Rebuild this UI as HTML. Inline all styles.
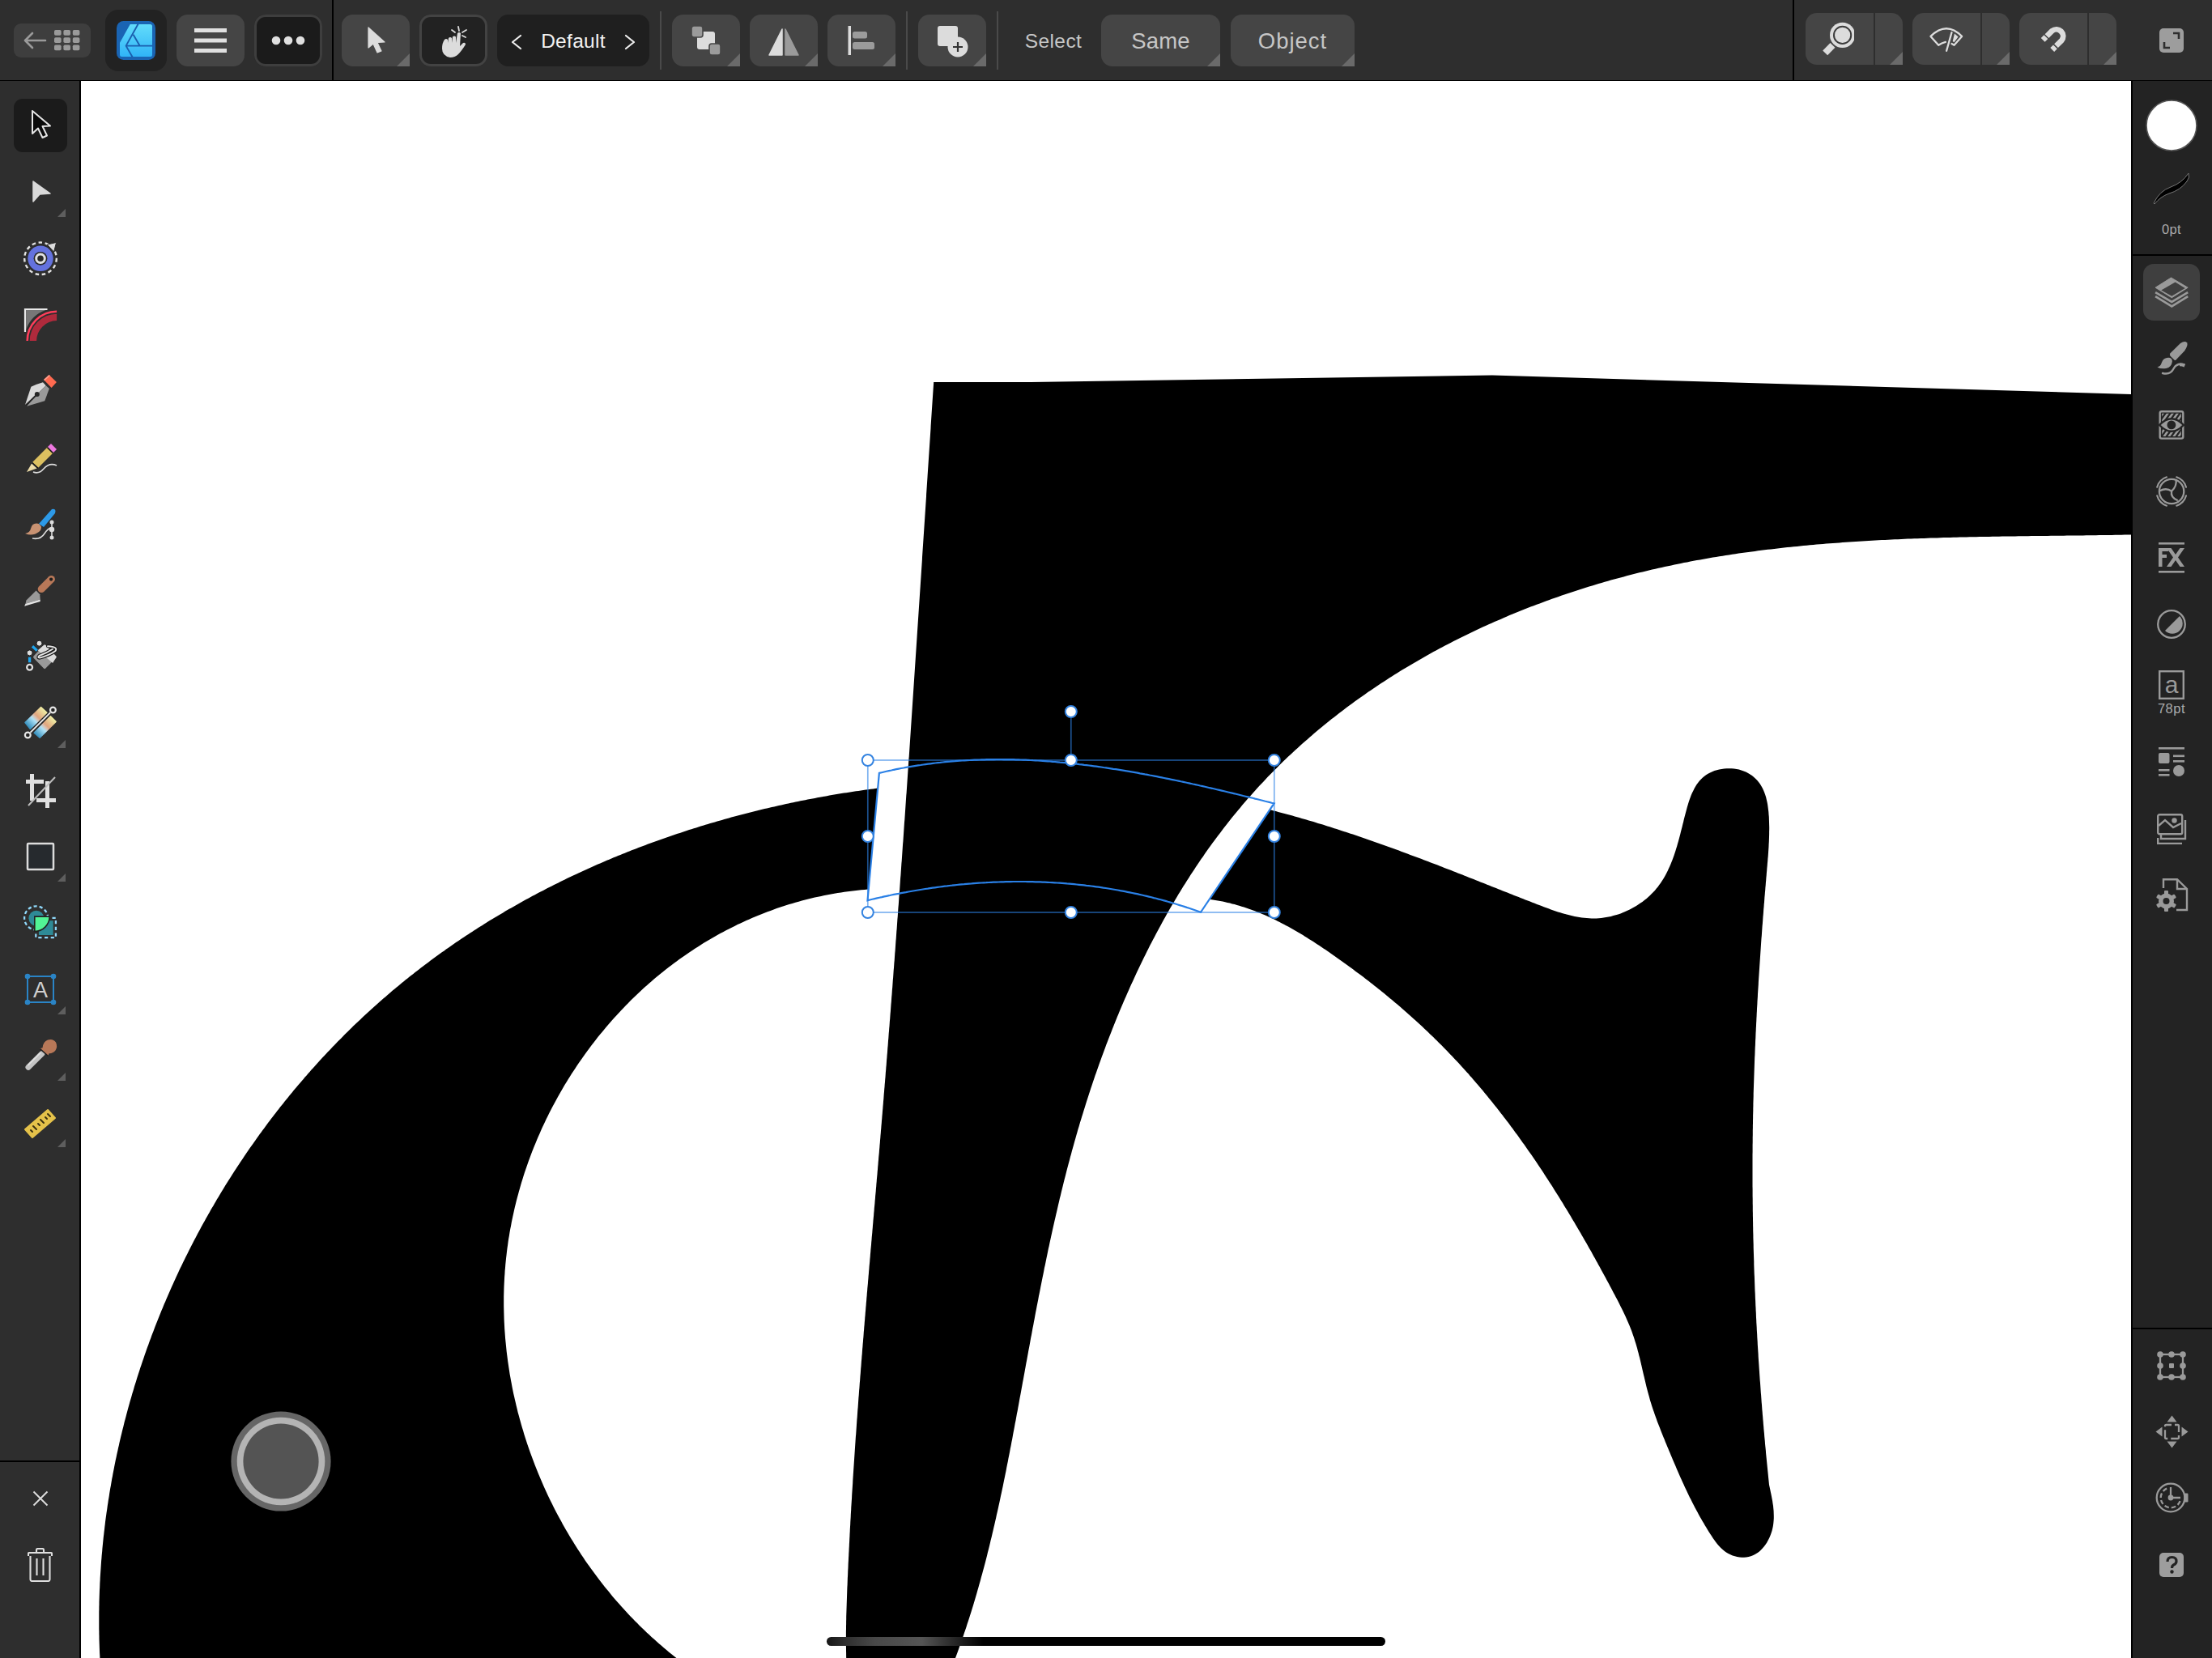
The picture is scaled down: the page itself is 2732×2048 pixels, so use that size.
<!DOCTYPE html>
<html><head><meta charset="utf-8"><style>
html,body{margin:0;padding:0;}
body{width:2732px;height:2048px;position:relative;overflow:hidden;background:#2e2e2e;font-family:"Liberation Sans",sans-serif;}
</style></head><body>
<div style="position:absolute;left:0;top:0;width:2732px;height:99px;background:#2e2e2e"></div>
<div style="position:absolute;left:0;top:99px;width:2732px;height:1px;background:#000"></div>
<div style="position:absolute;left:0;top:100px;width:98px;height:1948px;background:#2e2e2e"></div>
<div style="position:absolute;left:98px;top:100px;width:2px;height:1948px;background:#000"></div>

<svg id="cv" width="2532" height="1948" viewBox="100 100 2532 1948" style="position:absolute;left:100px;top:100px">
  <rect x="100" y="100" width="2532" height="1948" fill="#fff"/>
  <path d="M120 2075 L123.4 2048 L123.4 2048.0 L123.3 2045.0 L123.1 2042.0 L123.0 2039.0 L122.9 2036.0 L122.8 2033.0 L122.7 2030.0 L122.6 2027.0 L122.5 2024.0 L122.5 2021.0 L122.4 2018.0 L122.4 2015.0 L122.3 2012.0 L122.3 2009.0 L122.3 2006.0 L122.3 2003.0 L122.3 1999.9 L122.3 1996.9 L122.3 1993.9 L122.3 1990.9 L122.4 1987.9 L122.4 1984.9 L122.5 1981.9 L122.5 1978.9 L122.6 1975.9 L122.7 1972.9 L122.8 1969.9 L122.9 1966.9 L123.0 1963.9 L123.2 1960.9 L123.3 1957.9 L123.4 1954.9 L123.6 1951.9 L123.7 1948.9 L123.9 1945.9 L124.1 1942.9 L124.3 1939.9 L124.5 1936.9 L124.7 1933.9 L124.9 1930.9 L125.1 1927.9 L125.4 1924.9 L125.6 1921.9 L125.9 1919.0 L126.2 1916.0 L126.4 1913.0 L126.7 1910.0 L127.0 1907.0 L127.3 1904.0 L127.6 1901.0 L127.9 1898.0 L128.3 1895.0 L128.6 1892.0 L129.0 1889.1 L129.3 1886.1 L129.7 1883.1 L130.0 1880.1 L130.4 1877.1 L130.8 1874.1 L131.2 1871.2 L131.6 1868.2 L132.1 1865.2 L132.5 1862.2 L132.9 1859.3 L133.4 1856.3 L133.8 1853.3 L134.3 1850.4 L134.8 1847.4 L135.2 1844.4 L135.7 1841.4 L136.2 1838.5 L136.8 1835.5 L137.3 1832.6 L137.8 1829.6 L138.3 1826.6 L138.9 1823.7 L139.4 1820.7 L140.0 1817.8 L140.6 1814.8 L141.1 1811.9 L141.7 1808.9 L142.3 1806.0 L142.9 1803.0 L143.6 1800.1 L144.2 1797.1 L144.8 1794.2 L145.5 1791.2 L146.1 1788.3 L146.8 1785.4 L147.4 1782.4 L148.1 1779.5 L148.8 1776.6 L149.5 1773.6 L150.2 1770.7 L150.9 1767.8 L151.6 1764.9 L152.4 1761.9 L153.1 1759.0 L153.8 1756.1 L154.6 1753.2 L155.4 1750.3 L156.1 1747.4 L156.9 1744.5 L157.7 1741.6 L158.5 1738.6 L159.3 1735.7 L160.1 1732.8 L160.9 1729.9 L161.8 1727.1 L162.6 1724.2 L163.4 1721.3 L164.3 1718.4 L165.2 1715.5 L166.0 1712.6 L166.9 1709.7 L167.8 1706.9 L168.7 1704.0 L169.6 1701.1 L170.5 1698.2 L171.4 1695.4 L172.4 1692.5 L173.3 1689.6 L174.3 1686.8 L175.2 1683.9 L176.2 1681.1 L177.2 1678.2 L178.1 1675.4 L179.1 1672.5 L180.1 1669.7 L181.1 1666.8 L182.1 1664.0 L183.2 1661.2 L184.2 1658.3 L185.2 1655.5 L186.3 1652.7 L187.3 1649.8 L188.4 1647.0 L189.5 1644.2 L190.5 1641.4 L191.6 1638.6 L192.7 1635.8 L193.8 1633.0 L194.9 1630.2 L196.0 1627.4 L197.2 1624.6 L198.3 1621.8 L199.4 1619.0 L200.6 1616.2 L201.7 1613.4 L202.9 1610.6 L204.1 1607.9 L205.3 1605.1 L206.5 1602.3 L207.7 1599.5 L208.9 1596.8 L210.1 1594.0 L211.3 1591.3 L212.5 1588.5 L213.8 1585.8 L215.0 1583.0 L216.3 1580.3 L217.5 1577.5 L218.8 1574.8 L220.1 1572.1 L221.3 1569.3 L222.6 1566.6 L223.9 1563.9 L225.2 1561.2 L226.5 1558.5 L227.9 1555.8 L229.2 1553.1 L230.5 1550.4 L231.9 1547.7 L233.2 1545.0 L234.6 1542.3 L236.0 1539.6 L237.3 1536.9 L238.7 1534.2 L240.1 1531.6 L241.5 1528.9 L242.9 1526.2 L244.3 1523.6 L245.7 1520.9 L247.2 1518.3 L248.6 1515.6 L250.0 1513.0 L251.5 1510.3 L253.0 1507.7 L254.4 1505.1 L255.9 1502.4 L257.4 1499.8 L258.9 1497.2 L260.3 1494.6 L261.8 1492.0 L263.4 1489.4 L264.9 1486.8 L266.4 1484.2 L267.9 1481.6 L269.5 1479.0 L271.0 1476.4 L272.6 1473.8 L274.1 1471.2 L275.7 1468.7 L277.3 1466.1 L278.8 1463.5 L280.4 1461.0 L282.0 1458.4 L283.6 1455.9 L285.2 1453.4 L286.9 1450.8 L288.5 1448.3 L290.1 1445.8 L291.8 1443.2 L293.4 1440.7 L295.1 1438.2 L296.7 1435.7 L298.4 1433.2 L300.1 1430.7 L301.7 1428.2 L303.4 1425.7 L305.1 1423.2 L306.8 1420.8 L308.5 1418.3 L310.3 1415.8 L312.0 1413.4 L313.7 1410.9 L315.5 1408.5 L317.2 1406.0 L319.0 1403.6 L320.7 1401.1 L322.5 1398.7 L324.2 1396.3 L326.0 1393.9 L327.8 1391.4 L329.6 1389.0 L331.4 1386.6 L333.2 1384.2 L335.0 1381.8 L336.8 1379.5 L338.7 1377.1 L340.5 1374.7 L342.3 1372.3 L344.2 1370.0 L346.0 1367.6 L347.9 1365.2 L349.8 1362.9 L351.6 1360.6 L353.5 1358.2 L355.4 1355.9 L357.3 1353.6 L359.2 1351.2 L361.1 1348.9 L363.0 1346.6 L365.0 1344.3 L366.9 1342.0 L368.8 1339.7 L370.8 1337.5 L372.7 1335.2 L374.7 1332.9 L376.6 1330.6 L378.6 1328.4 L380.6 1326.1 L382.5 1323.9 L384.5 1321.6 L386.5 1319.4 L388.5 1317.2 L390.5 1314.9 L392.5 1312.7 L394.5 1310.5 L396.6 1308.3 L398.6 1306.1 L400.6 1303.9 L402.7 1301.7 L404.7 1299.6 L406.8 1297.4 L408.9 1295.2 L410.9 1293.1 L413.0 1290.9 L415.1 1288.8 L417.2 1286.6 L419.3 1284.5 L421.4 1282.4 L423.5 1280.2 L425.6 1278.1 L427.7 1276.0 L429.8 1273.9 L432.0 1271.8 L434.1 1269.7 L436.2 1267.6 L438.4 1265.6 L440.5 1263.5 L442.7 1261.4 L444.9 1259.4 L447.1 1257.3 L449.2 1255.3 L451.4 1253.3 L453.6 1251.2 L455.8 1249.2 L458.0 1247.2 L460.2 1245.2 L462.4 1243.2 L464.7 1241.2 L466.9 1239.2 L469.1 1237.2 L471.4 1235.3 L473.6 1233.3 L475.9 1231.4 L478.1 1229.4 L480.4 1227.5 L482.7 1225.5 L484.9 1223.6 L487.2 1221.7 L489.5 1219.8 L491.8 1217.9 L494.1 1216.0 L496.4 1214.1 L498.7 1212.2 L501.0 1210.3 L503.4 1208.5 L505.7 1206.6 L508.0 1204.7 L510.4 1202.9 L512.7 1201.1 L515.1 1199.2 L517.4 1197.4 L519.8 1195.6 L522.2 1193.8 L524.5 1192.0 L526.9 1190.2 L529.3 1188.4 L531.7 1186.6 L534.1 1184.8 L536.5 1183.1 L538.9 1181.3 L541.3 1179.6 L543.7 1177.8 L546.1 1176.1 L548.6 1174.4 L551.0 1172.6 L553.4 1170.9 L555.9 1169.2 L558.3 1167.5 L560.8 1165.8 L563.2 1164.1 L565.7 1162.5 L568.2 1160.8 L570.7 1159.1 L573.1 1157.5 L575.6 1155.8 L578.1 1154.2 L580.6 1152.5 L583.1 1150.9 L585.6 1149.3 L588.1 1147.7 L590.6 1146.1 L593.1 1144.5 L595.7 1142.9 L598.2 1141.3 L600.7 1139.7 L603.3 1138.1 L605.8 1136.6 L608.4 1135.0 L610.9 1133.5 L613.5 1131.9 L616.0 1130.4 L618.6 1128.9 L621.2 1127.4 L623.7 1125.8 L626.3 1124.3 L628.9 1122.8 L631.5 1121.4 L634.1 1119.9 L636.7 1118.4 L639.3 1116.9 L641.9 1115.5 L644.5 1114.0 L647.1 1112.6 L649.8 1111.1 L652.4 1109.7 L655.0 1108.3 L657.6 1106.8 L660.3 1105.4 L662.9 1104.0 L665.6 1102.6 L668.2 1101.2 L670.9 1099.9 L673.5 1098.5 L676.2 1097.1 L678.9 1095.7 L681.5 1094.4 L684.2 1093.0 L686.9 1091.7 L689.6 1090.4 L692.2 1089.0 L694.9 1087.7 L697.6 1086.4 L700.3 1085.1 L703.0 1083.8 L705.7 1082.5 L708.4 1081.2 L711.2 1080.0 L713.9 1078.7 L716.6 1077.4 L719.3 1076.2 L722.0 1074.9 L724.8 1073.7 L727.5 1072.5 L730.3 1071.2 L733.0 1070.0 L735.7 1068.8 L738.5 1067.6 L741.2 1066.4 L744.0 1065.2 L746.8 1064.0 L749.5 1062.8 L752.3 1061.7 L755.1 1060.5 L757.8 1059.3 L760.6 1058.2 L763.4 1057.0 L766.2 1055.9 L769.0 1054.8 L771.8 1053.7 L774.6 1052.6 L777.3 1051.4 L780.1 1050.3 L783.0 1049.2 L785.8 1048.2 L788.6 1047.1 L791.4 1046.0 L794.2 1044.9 L797.0 1043.9 L799.8 1042.8 L802.7 1041.8 L805.5 1040.8 L808.3 1039.7 L811.2 1038.7 L814.0 1037.7 L816.8 1036.7 L819.7 1035.7 L822.5 1034.7 L825.4 1033.7 L828.2 1032.7 L831.1 1031.7 L833.9 1030.8 L836.8 1029.8 L839.7 1028.9 L842.5 1027.9 L845.4 1027.0 L848.3 1026.0 L851.1 1025.1 L854.0 1024.2 L856.9 1023.3 L859.8 1022.4 L862.6 1021.5 L865.5 1020.6 L868.4 1019.7 L871.3 1018.8 L874.2 1017.9 L877.1 1017.1 L880.0 1016.2 L882.9 1015.4 L885.8 1014.5 L888.7 1013.7 L891.6 1012.9 L894.5 1012.0 L897.4 1011.2 L900.3 1010.4 L903.2 1009.6 L906.2 1008.8 L909.1 1008.0 L912.0 1007.3 L914.9 1006.5 L917.9 1005.7 L920.8 1005.0 L923.7 1004.2 L926.6 1003.5 L929.6 1002.7 L932.5 1002.0 L935.5 1001.3 L938.4 1000.5 L941.3 999.8 L944.3 999.1 L947.2 998.4 L950.2 997.7 L953.1 997.0 L956.1 996.4 L959.0 995.7 L962.0 995.0 L964.9 994.4 L967.9 993.7 L970.8 993.1 L973.8 992.4 L976.8 991.8 L979.7 991.2 L982.7 990.6 L985.7 989.9 L988.6 989.3 L991.6 988.7 L994.6 988.2 L997.5 987.6 L1000.5 987.0 L1003.5 986.4 L1006.5 985.9 L1009.4 985.3 L1012.4 984.8 L1015.4 984.2 L1018.4 983.7 L1021.4 983.2 L1024.4 982.6 L1027.3 982.1 L1030.3 981.6 L1033.3 981.1 L1036.3 980.6 L1039.3 980.1 L1042.3 979.6 L1045.3 979.2 L1048.3 978.7 L1051.3 978.2 L1054.2 977.8 L1057.2 977.3 L1060.2 976.9 L1063.2 976.4 L1066.2 976.0 L1069.2 975.6 L1072.2 975.2 L1075.2 974.8 L1078.2 974.4 L1081.2 974.0 L1084.2 973.6 L1087.2 973.2 L1090.2 972.8 L1093.3 972.5 L1096.3 972.1 L1099.3 971.8 L1102.3 971.4 L1105.3 971.1 L1108.3 970.7 L1111.3 970.4 L1114.3 970.1 L1117.3 969.8 L1120.3 969.5 L1123.3 969.2 L1126.3 968.9 L1129.4 968.6 L1132.4 968.3 L1135.4 968.0 L1138.4 967.7 L1141.4 967.5 L1144.4 967.2 L1147.4 967.0 L1150.4 966.7 L1153.4 966.5 L1156.5 966.3 L1159.5 966.1 L1162.5 965.8 L1165.5 965.6 L1168.5 965.4 L1171.5 965.2 L1174.5 965.0 L1177.6 964.9 L1180.6 964.7 L1183.6 964.5 L1186.6 964.4 L1189.6 964.2 L1192.6 964.0 L1195.6 963.9 L1198.6 963.8 L1201.7 963.6 L1204.7 963.5 L1207.7 963.4 L1210.7 963.3 L1213.7 963.2 L1216.7 963.1 L1219.7 963.0 L1222.7 962.9 L1225.7 962.8 L1228.8 962.8 L1231.8 962.7 L1234.8 962.6 L1237.8 962.6 L1240.8 962.5 L1243.8 962.5 L1246.8 962.5 L1249.8 962.5 L1252.8 962.4 L1255.8 962.4 L1258.8 962.4 L1261.8 962.4 L1264.8 962.4 L1267.8 962.5 L1270.9 962.5 L1273.9 962.5 L1276.9 962.5 L1279.9 962.6 L1282.9 962.6 L1285.9 962.7 L1288.9 962.8 L1291.9 962.8 L1294.9 962.9 L1297.9 963.0 L1300.9 963.1 L1303.9 963.2 L1306.9 963.3 L1309.9 963.4 L1312.9 963.5 L1315.9 963.6 L1318.9 963.8 L1321.8 963.9 L1324.8 964.0 L1327.8 964.2 L1330.8 964.4 L1333.8 964.5 L1336.8 964.7 L1339.8 964.9 L1342.8 965.1 L1345.8 965.3 L1348.8 965.5 L1351.8 965.7 L1354.7 965.9 L1357.7 966.1 L1360.7 966.3 L1363.7 966.6 L1366.7 966.8 L1369.7 967.0 L1372.7 967.3 L1375.6 967.6 L1378.6 967.8 L1381.6 968.1 L1384.6 968.4 L1387.6 968.7 L1390.5 969.0 L1393.5 969.3 L1396.5 969.6 L1399.5 969.9 L1402.4 970.2 L1405.4 970.6 L1408.4 970.9 L1411.4 971.3 L1414.3 971.6 L1417.3 972.0 L1420.3 972.3 L1423.2 972.7 L1426.2 973.1 L1429.2 973.5 L1432.1 973.9 L1435.1 974.3 L1438.1 974.7 L1441.0 975.1 L1444.0 975.5 L1446.9 976.0 L1449.9 976.4 L1452.8 976.9 L1455.8 977.3 L1458.8 977.8 L1461.7 978.2 L1464.7 978.7 L1467.6 979.2 L1470.6 979.7 L1473.5 980.2 L1476.5 980.7 L1479.4 981.2 L1482.4 981.7 L1485.3 982.2 L1488.2 982.8 L1491.2 983.3 L1494.1 983.9 L1497.1 984.4 L1500.0 985.0 L1502.9 985.5 L1505.9 986.1 L1508.8 986.7 L1511.7 987.3 L1514.7 987.9 L1517.6 988.5 L1520.5 989.1 L1523.5 989.7 L1526.4 990.4 L1529.3 991.0 L1532.2 991.6 L1535.2 992.3 L1538.1 992.9 L1541.0 993.6 L1543.9 994.3 L1546.8 994.9 L1549.8 995.6 L1552.7 996.3 L1555.6 997.0 L1558.5 997.7 L1561.4 998.5 L1564.3 999.2 L1567.2 999.9 L1570.1 1000.6 L1573.0 1001.4 L1575.9 1002.1 L1578.8 1002.9 L1581.7 1003.7 L1584.6 1004.4 L1587.5 1005.2 L1590.4 1006.0 L1593.3 1006.8 L1596.2 1007.6 L1599.1 1008.4 L1602.0 1009.2 L1604.9 1010.1 L1607.8 1010.9 L1610.7 1011.7 L1613.5 1012.6 L1616.4 1013.4 L1619.3 1014.3 L1622.2 1015.1 L1625.1 1016.0 L1627.9 1016.9 L1630.8 1017.8 L1633.7 1018.6 L1636.5 1019.5 L1639.4 1020.4 L1642.3 1021.3 L1645.2 1022.2 L1648.0 1023.2 L1650.9 1024.1 L1653.7 1025.0 L1656.6 1025.9 L1659.5 1026.9 L1662.3 1027.8 L1665.2 1028.7 L1668.0 1029.7 L1670.9 1030.6 L1673.7 1031.6 L1676.6 1032.6 L1679.4 1033.5 L1682.3 1034.5 L1685.1 1035.5 L1688.0 1036.5 L1690.8 1037.5 L1693.7 1038.5 L1696.5 1039.4 L1699.3 1040.4 L1702.2 1041.4 L1705.0 1042.5 L1707.9 1043.5 L1710.7 1044.5 L1713.5 1045.5 L1716.3 1046.5 L1719.2 1047.5 L1722.0 1048.6 L1724.8 1049.6 L1727.7 1050.6 L1730.5 1051.7 L1733.3 1052.7 L1736.1 1053.8 L1738.9 1054.8 L1741.8 1055.9 L1744.6 1056.9 L1747.4 1058.0 L1750.2 1059.0 L1753.0 1060.1 L1755.8 1061.1 L1758.6 1062.2 L1761.4 1063.3 L1764.2 1064.3 L1767.1 1065.4 L1769.9 1066.5 L1772.7 1067.6 L1775.5 1068.6 L1778.3 1069.7 L1781.1 1070.8 L1783.9 1071.9 L1786.6 1073.0 L1789.4 1074.1 L1792.2 1075.1 L1795.0 1076.2 L1797.8 1077.3 L1800.6 1078.4 L1803.4 1079.5 L1806.2 1080.6 L1809.0 1081.7 L1811.7 1082.8 L1814.5 1083.9 L1817.3 1085.0 L1820.1 1086.1 L1822.9 1087.2 L1825.6 1088.3 L1828.4 1089.4 L1831.2 1090.5 L1833.9 1091.6 L1836.7 1092.7 L1839.5 1093.8 L1842.3 1094.9 L1845.0 1096.0 L1847.8 1097.1 L1850.6 1098.2 L1853.3 1099.3 L1856.1 1100.4 L1858.9 1101.5 L1861.7 1102.6 L1864.5 1103.7 L1867.2 1104.8 L1870.0 1105.9 L1872.8 1107.0 L1875.6 1108.1 L1878.4 1109.2 L1881.2 1110.3 L1884.0 1111.4 L1886.9 1112.5 L1889.7 1113.6 L1892.5 1114.7 L1895.4 1115.8 L1898.2 1116.9 L1901.1 1118.0 L1903.9 1119.1 L1906.8 1120.2 L1909.7 1121.3 L1912.6 1122.3 L1915.5 1123.4 L1918.4 1124.4 L1921.3 1125.4 L1924.2 1126.4 L1927.1 1127.3 L1930.1 1128.2 L1933.0 1129.0 L1936.0 1129.8 L1938.9 1130.6 L1941.9 1131.3 L1944.8 1131.9 L1947.8 1132.5 L1950.7 1133.0 L1953.7 1133.4 L1956.7 1133.8 L1959.7 1134.1 L1962.7 1134.3 L1965.7 1134.4 L1968.7 1134.4 L1971.7 1134.4 L1974.7 1134.2 L1977.7 1134.0 L1980.7 1133.6 L1983.7 1133.1 L1986.7 1132.6 L1989.7 1131.9 L1992.6 1131.1 L1995.6 1130.3 L1998.5 1129.4 L2001.5 1128.4 L2004.3 1127.3 L2007.2 1126.1 L2010.0 1124.8 L2012.8 1123.5 L2015.5 1122.0 L2018.2 1120.5 L2020.9 1119.0 L2023.5 1117.3 L2026.0 1115.6 L2028.5 1113.9 L2030.9 1112.0 L2033.3 1110.2 L2035.5 1108.2 L2037.7 1106.2 L2039.9 1104.1 L2041.9 1102.0 L2043.9 1099.9 L2045.8 1097.6 L2047.6 1095.4 L2049.3 1093.1 L2051.0 1090.7 L2052.6 1088.3 L2054.1 1085.9 L2055.6 1083.4 L2057.0 1080.9 L2058.4 1078.3 L2059.7 1075.7 L2060.9 1073.1 L2062.1 1070.4 L2063.3 1067.7 L2064.4 1065.0 L2065.5 1062.3 L2066.5 1059.5 L2067.5 1056.7 L2068.5 1053.8 L2069.4 1050.9 L2070.3 1048.1 L2071.2 1045.2 L2072.0 1042.2 L2072.9 1039.3 L2073.7 1036.3 L2074.5 1033.3 L2075.3 1030.3 L2076.0 1027.3 L2076.8 1024.3 L2077.6 1021.3 L2078.3 1018.2 L2079.1 1015.2 L2079.8 1012.1 L2080.6 1009.1 L2081.4 1006.0 L2082.2 1002.9 L2083.0 999.9 L2083.8 996.9 L2084.7 993.9 L2085.6 990.9 L2086.6 988.0 L2087.7 985.1 L2088.7 982.3 L2089.9 979.5 L2091.2 976.9 L2092.5 974.3 L2093.9 971.8 L2095.4 969.3 L2097.1 967.0 L2098.8 964.8 L2100.7 962.8 L2102.7 960.8 L2104.8 959.0 L2107.1 957.3 L2109.5 955.8 L2112.0 954.4 L2114.7 953.2 L2117.5 952.1 L2120.4 951.2 L2123.3 950.5 L2126.3 949.9 L2129.4 949.5 L2132.5 949.3 L2135.6 949.2 L2138.7 949.3 L2141.7 949.5 L2144.8 950.0 L2147.8 950.6 L2150.7 951.4 L2153.6 952.4 L2156.3 953.6 L2159.0 954.9 L2161.5 956.4 L2163.9 958.1 L2166.2 959.9 L2168.4 961.9 L2170.4 964.0 L2172.2 966.2 L2173.9 968.6 L2175.4 971.0 L2176.8 973.6 L2178.1 976.2 L2179.2 979.0 L2180.2 981.8 L2181.1 984.6 L2181.8 987.5 L2182.5 990.5 L2183.1 993.5 L2183.5 996.6 L2183.9 999.7 L2184.3 1002.8 L2184.5 1005.9 L2184.8 1009.0 L2184.9 1012.2 L2185.0 1015.3 L2185.1 1018.4 L2185.2 1021.5 L2185.2 1024.6 L2185.1 1027.6 L2185.1 1030.7 L2185.0 1033.7 L2184.9 1036.7 L2184.8 1039.8 L2184.6 1042.8 L2184.5 1045.8 L2184.3 1048.8 L2184.1 1051.8 L2183.9 1054.8 L2183.7 1057.7 L2183.4 1060.7 L2183.2 1063.7 L2182.9 1066.7 L2182.7 1069.6 L2182.4 1072.6 L2182.2 1075.6 L2181.9 1078.6 L2181.7 1081.5 L2181.4 1084.5 L2181.2 1087.5 L2180.9 1090.5 L2180.7 1093.4 L2180.4 1096.4 L2180.2 1099.4 L2179.9 1102.4 L2179.7 1105.3 L2179.4 1108.3 L2179.2 1111.3 L2179.0 1114.3 L2178.7 1117.3 L2178.5 1120.2 L2178.2 1123.2 L2178.0 1126.2 L2177.8 1129.2 L2177.5 1132.2 L2177.3 1135.2 L2177.1 1138.2 L2176.9 1141.1 L2176.6 1144.1 L2176.4 1147.1 L2176.2 1150.1 L2176.0 1153.1 L2175.8 1156.1 L2175.5 1159.1 L2175.3 1162.1 L2175.1 1165.1 L2174.9 1168.0 L2174.7 1171.0 L2174.5 1174.0 L2174.3 1177.0 L2174.1 1180.0 L2173.9 1183.0 L2173.7 1186.0 L2173.5 1189.0 L2173.3 1192.0 L2173.1 1195.0 L2172.9 1198.0 L2172.7 1201.0 L2172.5 1204.0 L2172.3 1207.0 L2172.1 1210.0 L2171.9 1213.0 L2171.8 1216.0 L2171.6 1219.0 L2171.4 1222.0 L2171.2 1225.0 L2171.0 1228.0 L2170.9 1231.0 L2170.7 1234.0 L2170.5 1237.0 L2170.4 1240.0 L2170.2 1243.0 L2170.0 1246.0 L2169.9 1249.0 L2169.7 1252.0 L2169.6 1255.0 L2169.4 1258.0 L2169.3 1261.0 L2169.1 1264.0 L2169.0 1267.0 L2168.8 1270.0 L2168.7 1273.0 L2168.5 1276.0 L2168.4 1279.0 L2168.3 1282.0 L2168.1 1285.0 L2168.0 1288.0 L2167.9 1291.0 L2167.7 1294.0 L2167.6 1297.0 L2167.5 1300.0 L2167.4 1303.1 L2167.2 1306.1 L2167.1 1309.1 L2167.0 1312.1 L2166.9 1315.1 L2166.8 1318.1 L2166.7 1321.1 L2166.6 1324.1 L2166.5 1327.1 L2166.4 1330.1 L2166.3 1333.1 L2166.2 1336.1 L2166.1 1339.1 L2166.0 1342.1 L2165.9 1345.1 L2165.8 1348.1 L2165.7 1351.1 L2165.7 1354.1 L2165.6 1357.2 L2165.5 1360.2 L2165.4 1363.2 L2165.4 1366.2 L2165.3 1369.2 L2165.3 1372.2 L2165.2 1375.2 L2165.1 1378.2 L2165.1 1381.2 L2165.0 1384.2 L2165.0 1387.2 L2164.9 1390.2 L2164.9 1393.2 L2164.8 1396.2 L2164.8 1399.2 L2164.8 1402.2 L2164.7 1405.2 L2164.7 1408.2 L2164.7 1411.2 L2164.6 1414.3 L2164.6 1417.3 L2164.6 1420.3 L2164.6 1423.3 L2164.5 1426.3 L2164.5 1429.3 L2164.5 1432.3 L2164.5 1435.3 L2164.5 1438.3 L2164.5 1441.3 L2164.5 1444.3 L2164.5 1447.3 L2164.5 1450.3 L2164.5 1453.3 L2164.5 1456.3 L2164.5 1459.3 L2164.5 1462.3 L2164.5 1465.3 L2164.6 1468.3 L2164.6 1471.3 L2164.6 1474.3 L2164.6 1477.3 L2164.7 1480.3 L2164.7 1483.3 L2164.7 1486.3 L2164.8 1489.4 L2164.8 1492.4 L2164.8 1495.4 L2164.9 1498.4 L2164.9 1501.4 L2165.0 1504.4 L2165.0 1507.4 L2165.1 1510.4 L2165.1 1513.4 L2165.2 1516.4 L2165.2 1519.4 L2165.3 1522.4 L2165.4 1525.4 L2165.4 1528.4 L2165.5 1531.4 L2165.6 1534.4 L2165.7 1537.4 L2165.7 1540.4 L2165.8 1543.4 L2165.9 1546.4 L2166.0 1549.4 L2166.1 1552.4 L2166.2 1555.4 L2166.3 1558.4 L2166.3 1561.4 L2166.4 1564.4 L2166.5 1567.4 L2166.6 1570.4 L2166.7 1573.4 L2166.9 1576.4 L2167.0 1579.4 L2167.1 1582.4 L2167.2 1585.4 L2167.3 1588.4 L2167.4 1591.4 L2167.5 1594.4 L2167.7 1597.4 L2167.8 1600.4 L2167.9 1603.4 L2168.1 1606.4 L2168.2 1609.4 L2168.3 1612.4 L2168.5 1615.4 L2168.6 1618.4 L2168.8 1621.4 L2168.9 1624.4 L2169.0 1627.4 L2169.2 1630.4 L2169.3 1633.4 L2169.5 1636.4 L2169.7 1639.4 L2169.8 1642.4 L2170.0 1645.4 L2170.2 1648.4 L2170.3 1651.4 L2170.5 1654.4 L2170.7 1657.4 L2170.8 1660.4 L2171.0 1663.4 L2171.2 1666.4 L2171.4 1669.4 L2171.6 1672.4 L2171.7 1675.4 L2171.9 1678.4 L2172.1 1681.4 L2172.3 1684.3 L2172.5 1687.3 L2172.7 1690.3 L2172.9 1693.3 L2173.1 1696.3 L2173.3 1699.3 L2173.5 1702.3 L2173.7 1705.3 L2174.0 1708.3 L2174.2 1711.3 L2174.4 1714.3 L2174.6 1717.3 L2174.8 1720.3 L2175.1 1723.3 L2175.3 1726.3 L2175.5 1729.3 L2175.7 1732.3 L2176.0 1735.3 L2176.2 1738.3 L2176.4 1741.3 L2176.7 1744.3 L2176.9 1747.2 L2177.2 1750.2 L2177.4 1753.2 L2177.7 1756.2 L2177.9 1759.2 L2178.2 1762.2 L2178.4 1765.2 L2178.7 1768.2 L2179.0 1771.2 L2179.2 1774.2 L2179.5 1777.2 L2179.8 1780.2 L2180.0 1783.2 L2180.3 1786.2 L2180.6 1789.1 L2180.9 1792.1 L2181.1 1795.1 L2181.4 1798.1 L2181.7 1801.1 L2182.0 1804.1 L2182.3 1807.1 L2182.6 1810.1 L2182.9 1813.1 L2183.2 1816.1 L2183.5 1819.1 L2183.8 1822.0 L2184.1 1825.0 L2184.4 1828.0 L2184.7 1831.0 L2185.0 1834.0 L2185.0 1834.0 L2185.6 1836.7 L2186.2 1839.5 L2186.8 1842.4 L2187.4 1845.3 L2188.0 1848.2 L2188.5 1851.1 L2189.1 1854.1 L2189.5 1857.1 L2190.0 1860.1 L2190.3 1863.2 L2190.6 1866.3 L2190.7 1869.3 L2190.8 1872.4 L2190.8 1875.5 L2190.6 1878.6 L2190.3 1881.7 L2189.9 1884.8 L2189.3 1887.8 L2188.5 1890.9 L2187.5 1893.9 L2186.4 1896.9 L2185.2 1899.8 L2183.8 1902.6 L2182.2 1905.4 L2180.5 1908.0 L2178.6 1910.5 L2176.6 1912.8 L2174.5 1914.9 L2172.3 1916.9 L2170.0 1918.6 L2167.5 1920.1 L2165.0 1921.3 L2162.4 1922.3 L2159.7 1923.0 L2156.9 1923.5 L2154.1 1923.7 L2151.2 1923.7 L2148.4 1923.5 L2145.5 1923.0 L2142.7 1922.3 L2139.9 1921.4 L2137.2 1920.2 L2134.6 1918.9 L2132.0 1917.4 L2129.6 1915.7 L2127.3 1913.8 L2125.1 1911.7 L2123.0 1909.5 L2121.0 1907.2 L2119.1 1904.8 L2117.3 1902.3 L2115.5 1899.7 L2113.8 1897.1 L2112.1 1894.5 L2110.5 1891.9 L2108.8 1889.2 L2107.2 1886.6 L2105.6 1884.0 L2104.1 1881.3 L2102.5 1878.7 L2101.0 1876.1 L2099.5 1873.4 L2098.0 1870.7 L2096.6 1868.1 L2095.2 1865.4 L2093.7 1862.8 L2092.3 1860.1 L2091.0 1857.4 L2089.6 1854.7 L2088.3 1852.0 L2086.9 1849.4 L2085.6 1846.7 L2084.3 1844.0 L2083.0 1841.3 L2081.7 1838.6 L2080.5 1835.9 L2079.2 1833.1 L2078.0 1830.4 L2076.8 1827.7 L2075.5 1825.0 L2074.3 1822.3 L2073.1 1819.5 L2071.9 1816.8 L2070.7 1814.1 L2069.6 1811.3 L2068.4 1808.6 L2067.2 1805.8 L2066.0 1803.1 L2064.9 1800.3 L2063.7 1797.6 L2062.6 1794.8 L2061.4 1792.0 L2060.3 1789.2 L2059.1 1786.5 L2058.0 1783.7 L2056.8 1780.9 L2055.7 1778.1 L2054.5 1775.3 L2053.4 1772.5 L2052.3 1769.7 L2051.2 1766.9 L2050.1 1764.1 L2049.0 1761.3 L2047.9 1758.5 L2046.8 1755.7 L2045.8 1752.8 L2044.8 1750.0 L2043.7 1747.1 L2042.8 1744.3 L2041.8 1741.4 L2040.8 1738.6 L2039.9 1735.7 L2039.0 1732.8 L2038.1 1729.9 L2037.3 1727.0 L2036.5 1724.1 L2035.7 1721.2 L2034.9 1718.3 L2034.1 1715.3 L2033.4 1712.4 L2032.7 1709.5 L2032.0 1706.5 L2031.3 1703.6 L2030.6 1700.6 L2029.9 1697.7 L2029.2 1694.8 L2028.5 1691.8 L2027.9 1688.9 L2027.2 1685.9 L2026.5 1683.0 L2025.8 1680.1 L2025.1 1677.1 L2024.3 1674.2 L2023.6 1671.3 L2022.8 1668.4 L2022.1 1665.5 L2021.2 1662.6 L2020.4 1659.8 L2019.5 1656.9 L2018.6 1654.1 L2017.7 1651.2 L2016.7 1648.4 L2015.7 1645.6 L2014.7 1642.8 L2013.6 1640.0 L2012.5 1637.3 L2011.3 1634.5 L2010.1 1631.8 L2008.9 1629.0 L2007.7 1626.3 L2006.4 1623.6 L2005.2 1620.9 L2003.9 1618.2 L2002.5 1615.5 L2001.2 1612.9 L1999.9 1610.2 L1998.5 1607.5 L1997.1 1604.8 L1995.7 1602.2 L1994.3 1599.5 L1992.9 1596.9 L1991.5 1594.2 L1990.1 1591.6 L1988.7 1588.9 L1987.3 1586.3 L1985.8 1583.6 L1984.4 1581.0 L1983.0 1578.3 L1981.6 1575.7 L1980.1 1573.0 L1978.7 1570.4 L1977.2 1567.7 L1975.8 1565.1 L1974.3 1562.4 L1972.9 1559.8 L1971.4 1557.2 L1970.0 1554.5 L1968.5 1551.9 L1967.0 1549.3 L1965.6 1546.6 L1964.1 1544.0 L1962.6 1541.4 L1961.1 1538.8 L1959.6 1536.1 L1958.1 1533.5 L1956.6 1530.9 L1955.1 1528.3 L1953.6 1525.7 L1952.1 1523.1 L1950.6 1520.5 L1949.1 1517.9 L1947.5 1515.3 L1946.0 1512.7 L1944.5 1510.1 L1942.9 1507.5 L1941.4 1504.9 L1939.9 1502.3 L1938.3 1499.7 L1936.7 1497.1 L1935.2 1494.5 L1933.6 1491.9 L1932.0 1489.4 L1930.5 1486.8 L1928.9 1484.2 L1927.3 1481.7 L1925.7 1479.1 L1924.1 1476.5 L1922.5 1474.0 L1920.9 1471.4 L1919.3 1468.9 L1917.7 1466.3 L1916.1 1463.8 L1914.4 1461.3 L1912.8 1458.7 L1911.2 1456.2 L1909.5 1453.7 L1907.9 1451.2 L1906.2 1448.6 L1904.6 1446.1 L1902.9 1443.6 L1901.2 1441.1 L1899.5 1438.6 L1897.9 1436.1 L1896.2 1433.6 L1894.5 1431.1 L1892.8 1428.6 L1891.1 1426.1 L1889.4 1423.7 L1887.6 1421.2 L1885.9 1418.7 L1884.2 1416.3 L1882.5 1413.8 L1880.7 1411.4 L1879.0 1408.9 L1877.2 1406.5 L1875.5 1404.0 L1873.7 1401.6 L1871.9 1399.2 L1870.1 1396.7 L1868.4 1394.3 L1866.6 1391.9 L1864.8 1389.5 L1863.0 1387.1 L1861.2 1384.7 L1859.3 1382.3 L1857.5 1379.9 L1855.7 1377.5 L1853.8 1375.2 L1852.0 1372.8 L1850.2 1370.4 L1848.3 1368.1 L1846.4 1365.7 L1844.6 1363.4 L1842.7 1361.0 L1840.8 1358.7 L1838.9 1356.4 L1837.0 1354.0 L1835.1 1351.7 L1833.2 1349.4 L1831.3 1347.1 L1829.3 1344.8 L1827.4 1342.5 L1825.5 1340.2 L1823.5 1337.9 L1821.6 1335.7 L1819.6 1333.4 L1817.6 1331.1 L1815.6 1328.9 L1813.7 1326.6 L1811.7 1324.4 L1809.7 1322.2 L1807.7 1319.9 L1805.6 1317.7 L1803.6 1315.5 L1801.6 1313.3 L1799.5 1311.1 L1797.5 1308.9 L1795.4 1306.7 L1793.4 1304.5 L1791.3 1302.4 L1789.2 1300.2 L1787.1 1298.1 L1785.1 1295.9 L1782.9 1293.8 L1780.8 1291.6 L1778.7 1289.5 L1776.6 1287.4 L1774.5 1285.3 L1772.3 1283.2 L1770.2 1281.1 L1768.0 1279.0 L1765.8 1276.9 L1763.7 1274.8 L1761.5 1272.8 L1759.3 1270.7 L1757.1 1268.6 L1754.9 1266.6 L1752.7 1264.6 L1750.5 1262.5 L1748.3 1260.5 L1746.0 1258.5 L1743.8 1256.5 L1741.6 1254.5 L1739.3 1252.5 L1737.1 1250.5 L1734.8 1248.5 L1732.5 1246.5 L1730.3 1244.5 L1728.0 1242.6 L1725.7 1240.6 L1723.4 1238.7 L1721.1 1236.7 L1718.8 1234.8 L1716.5 1232.9 L1714.2 1231.0 L1711.8 1229.0 L1709.5 1227.1 L1707.2 1225.2 L1704.8 1223.3 L1702.5 1221.5 L1700.1 1219.6 L1697.7 1217.7 L1695.4 1215.8 L1693.0 1214.0 L1690.6 1212.1 L1688.2 1210.3 L1685.9 1208.5 L1683.5 1206.6 L1681.1 1204.8 L1678.7 1203.0 L1676.2 1201.2 L1673.8 1199.4 L1671.4 1197.6 L1669.0 1195.8 L1666.5 1194.0 L1664.1 1192.2 L1661.7 1190.4 L1659.2 1188.7 L1656.8 1186.9 L1654.3 1185.2 L1651.8 1183.4 L1649.4 1181.7 L1646.9 1179.9 L1644.4 1178.2 L1642.0 1176.5 L1639.5 1174.8 L1637.0 1173.1 L1634.5 1171.4 L1632.0 1169.7 L1629.5 1168.0 L1627.0 1166.4 L1624.4 1164.7 L1621.9 1163.1 L1619.4 1161.5 L1616.8 1159.9 L1614.3 1158.3 L1611.7 1156.7 L1609.2 1155.1 L1606.6 1153.5 L1604.0 1152.0 L1601.4 1150.5 L1598.8 1149.0 L1596.2 1147.5 L1593.6 1146.0 L1591.0 1144.6 L1588.4 1143.2 L1585.7 1141.7 L1583.1 1140.4 L1580.4 1139.0 L1577.8 1137.7 L1575.1 1136.3 L1572.4 1135.0 L1569.7 1133.8 L1567.0 1132.5 L1564.3 1131.3 L1561.5 1130.1 L1558.8 1128.9 L1556.0 1127.8 L1553.2 1126.7 L1550.5 1125.6 L1547.7 1124.5 L1544.9 1123.5 L1542.0 1122.5 L1539.2 1121.5 L1536.4 1120.6 L1533.5 1119.7 L1530.6 1118.8 L1527.7 1117.9 L1524.8 1117.1 L1521.9 1116.4 L1519.0 1115.6 L1516.0 1114.9 L1513.1 1114.2 L1510.1 1113.6 L1507.1 1113.0 L1504.1 1112.4 L1501.1 1111.9 L1498.1 1111.4 L1495.0 1111.0 L1495.0 1111.0 L1350.0 1092.0 L1200.0 1090.0 L1072.0 1098.6 L1072.0 1098.6 L1067.8 1098.9 L1063.6 1099.3 L1059.4 1099.8 L1055.3 1100.2 L1051.1 1100.7 L1047.0 1101.2 L1042.8 1101.8 L1038.7 1102.4 L1034.6 1103.1 L1030.5 1103.8 L1026.4 1104.5 L1022.4 1105.2 L1018.3 1106.0 L1014.3 1106.9 L1010.3 1107.7 L1006.3 1108.6 L1002.3 1109.6 L998.3 1110.5 L994.3 1111.5 L990.4 1112.6 L986.4 1113.7 L982.5 1114.8 L978.6 1115.9 L974.7 1117.1 L970.8 1118.3 L967.0 1119.6 L963.1 1120.8 L959.3 1122.1 L955.5 1123.5 L951.7 1124.9 L947.9 1126.3 L944.1 1127.7 L940.4 1129.2 L936.6 1130.7 L932.9 1132.2 L929.2 1133.8 L925.5 1135.4 L921.8 1137.0 L918.2 1138.7 L914.5 1140.4 L910.9 1142.1 L907.3 1143.9 L903.7 1145.7 L900.2 1147.5 L896.6 1149.3 L893.1 1151.2 L889.5 1153.1 L886.0 1155.0 L882.6 1157.0 L879.1 1159.0 L875.7 1161.0 L872.2 1163.1 L868.8 1165.1 L865.4 1167.2 L862.0 1169.4 L858.7 1171.5 L855.4 1173.7 L852.0 1175.9 L848.7 1178.2 L845.5 1180.4 L842.2 1182.7 L838.9 1185.0 L835.7 1187.4 L832.5 1189.8 L829.3 1192.2 L826.2 1194.6 L823.0 1197.0 L819.9 1199.5 L816.8 1202.0 L813.7 1204.5 L810.6 1207.1 L807.6 1209.6 L804.6 1212.2 L801.6 1214.8 L798.6 1217.5 L795.6 1220.1 L792.7 1222.8 L789.8 1225.5 L786.9 1228.3 L784.0 1231.0 L781.1 1233.8 L778.3 1236.6 L775.5 1239.4 L772.7 1242.3 L769.9 1245.2 L767.2 1248.0 L764.5 1250.9 L761.7 1253.9 L759.1 1256.8 L756.4 1259.8 L753.8 1262.8 L751.2 1265.8 L748.6 1268.8 L746.0 1271.9 L743.5 1274.9 L740.9 1278.0 L738.4 1281.1 L736.0 1284.3 L733.5 1287.4 L731.1 1290.6 L728.7 1293.8 L726.3 1297.0 L723.9 1300.2 L721.6 1303.4 L719.3 1306.7 L717.0 1309.9 L714.7 1313.2 L712.5 1316.5 L710.3 1319.9 L708.1 1323.2 L705.9 1326.6 L703.8 1329.9 L701.7 1333.3 L699.6 1336.7 L697.5 1340.1 L695.5 1343.6 L693.5 1347.0 L691.5 1350.5 L689.5 1354.0 L687.6 1357.4 L685.7 1361.0 L683.8 1364.5 L681.9 1368.0 L680.1 1371.6 L678.3 1375.1 L676.5 1378.7 L674.7 1382.3 L673.0 1385.9 L671.3 1389.5 L669.6 1393.1 L668.0 1396.7 L666.4 1400.4 L664.8 1404.1 L663.2 1407.7 L661.7 1411.4 L660.2 1415.1 L658.7 1418.8 L657.2 1422.5 L655.8 1426.2 L654.4 1430.0 L653.0 1433.7 L651.7 1437.5 L650.4 1441.3 L649.1 1445.0 L647.8 1448.8 L646.6 1452.6 L645.4 1456.4 L644.2 1460.2 L643.1 1464.0 L642.0 1467.9 L640.9 1471.7 L639.9 1475.6 L638.8 1479.4 L637.8 1483.3 L636.9 1487.1 L635.9 1491.0 L635.0 1494.9 L634.2 1498.8 L633.3 1502.7 L632.5 1506.6 L631.7 1510.5 L631.0 1514.4 L630.2 1518.3 L629.5 1522.2 L628.9 1526.2 L628.2 1530.1 L627.6 1534.0 L627.1 1538.0 L626.5 1541.9 L626.0 1545.9 L625.6 1549.8 L625.1 1553.8 L624.7 1557.8 L624.3 1561.7 L624.0 1565.7 L623.6 1569.7 L623.4 1573.7 L623.1 1577.6 L622.9 1581.6 L622.7 1585.6 L622.5 1589.6 L622.4 1593.6 L622.3 1597.6 L622.2 1601.5 L622.2 1605.5 L622.2 1609.5 L622.2 1613.5 L622.3 1617.5 L622.4 1621.5 L622.5 1625.5 L622.6 1629.5 L622.8 1633.5 L623.0 1637.5 L623.2 1641.5 L623.5 1645.5 L623.8 1649.4 L624.1 1653.4 L624.5 1657.4 L624.9 1661.4 L625.3 1665.4 L625.7 1669.4 L626.2 1673.4 L626.7 1677.3 L627.2 1681.3 L627.8 1685.3 L628.4 1689.2 L629.0 1693.2 L629.6 1697.2 L630.3 1701.1 L631.0 1705.1 L631.8 1709.0 L632.5 1713.0 L633.3 1716.9 L634.1 1720.9 L635.0 1724.8 L635.9 1728.7 L636.8 1732.6 L637.7 1736.5 L638.7 1740.4 L639.6 1744.4 L640.7 1748.2 L641.7 1752.1 L642.8 1756.0 L643.9 1759.9 L645.0 1763.8 L646.2 1767.6 L647.3 1771.5 L648.5 1775.3 L649.8 1779.2 L651.0 1783.0 L652.3 1786.8 L653.6 1790.6 L655.0 1794.5 L656.4 1798.2 L657.8 1802.0 L659.2 1805.8 L660.6 1809.6 L662.1 1813.3 L663.6 1817.1 L665.1 1820.8 L666.7 1824.6 L668.3 1828.3 L669.9 1832.0 L671.5 1835.7 L673.2 1839.4 L674.8 1843.1 L676.5 1846.7 L678.3 1850.4 L680.0 1854.0 L681.8 1857.6 L683.6 1861.3 L685.5 1864.9 L687.3 1868.5 L689.2 1872.0 L691.1 1875.6 L693.1 1879.1 L695.0 1882.7 L697.0 1886.2 L699.0 1889.7 L701.1 1893.2 L703.1 1896.7 L705.2 1900.2 L707.3 1903.6 L709.4 1907.1 L711.6 1910.5 L713.8 1913.9 L716.0 1917.3 L718.2 1920.7 L720.5 1924.0 L722.7 1927.4 L725.0 1930.7 L727.4 1934.0 L729.7 1937.3 L732.1 1940.6 L734.5 1943.8 L736.9 1947.1 L739.3 1950.3 L741.8 1953.5 L744.3 1956.7 L746.8 1959.9 L749.3 1963.0 L751.9 1966.1 L754.4 1969.3 L757.0 1972.4 L759.6 1975.4 L762.3 1978.5 L765.0 1981.5 L767.6 1984.5 L770.4 1987.5 L773.1 1990.5 L775.8 1993.5 L778.6 1996.4 L781.4 1999.3 L784.2 2002.2 L787.1 2005.1 L789.9 2007.9 L792.8 2010.8 L795.7 2013.6 L798.7 2016.4 L801.6 2019.1 L804.6 2021.9 L807.6 2024.6 L810.6 2027.3 L813.6 2030.0 L816.7 2032.6 L819.7 2035.2 L822.8 2037.8 L825.9 2040.4 L829.1 2043.0 L832.2 2045.5 L835.4 2048.0 L850 2075 Z" fill="#000"/>
  <path d="M1085.9 954.9 L1085.9 954.9 L1088.9 954.2 L1091.9 953.5 L1094.9 952.8 L1097.9 952.1 L1101.0 951.5 L1104.0 950.8 L1107.0 950.2 L1110.0 949.6 L1113.0 949.0 L1116.0 948.5 L1119.0 947.9 L1122.1 947.4 L1125.1 946.9 L1128.1 946.4 L1131.1 945.9 L1134.1 945.4 L1137.1 945.0 L1140.2 944.5 L1143.2 944.1 L1146.2 943.7 L1149.2 943.3 L1152.2 942.9 L1155.2 942.5 L1158.3 942.2 L1161.3 941.9 L1164.3 941.5 L1167.3 941.2 L1170.3 940.9 L1173.3 940.7 L1176.4 940.4 L1179.4 940.2 L1182.4 939.9 L1185.4 939.7 L1188.4 939.5 L1191.4 939.3 L1194.5 939.1 L1197.5 939.0 L1200.5 938.8 L1203.5 938.7 L1206.5 938.6 L1209.5 938.5 L1212.6 938.4 L1215.6 938.3 L1218.6 938.2 L1221.6 938.1 L1224.6 938.1 L1227.6 938.1 L1230.7 938.0 L1233.7 938.0 L1236.7 938.0 L1239.7 938.1 L1242.7 938.1 L1245.7 938.1 L1248.7 938.2 L1251.8 938.2 L1254.8 938.3 L1257.8 938.4 L1260.8 938.5 L1263.8 938.6 L1266.8 938.7 L1269.8 938.9 L1272.9 939.0 L1275.9 939.2 L1278.9 939.3 L1281.9 939.5 L1284.9 939.7 L1287.9 939.9 L1290.9 940.1 L1293.9 940.3 L1296.9 940.5 L1299.9 940.8 L1303.0 941.0 L1306.0 941.3 L1309.0 941.6 L1312.0 941.8 L1315.0 942.1 L1318.0 942.4 L1321.0 942.7 L1324.0 943.1 L1327.0 943.4 L1330.0 943.7 L1333.0 944.1 L1336.0 944.4 L1339.0 944.8 L1342.0 945.1 L1345.0 945.5 L1348.0 945.9 L1351.0 946.3 L1354.0 946.7 L1357.0 947.1 L1360.0 947.5 L1363.0 948.0 L1366.0 948.4 L1369.0 948.8 L1372.0 949.3 L1375.0 949.8 L1378.0 950.2 L1381.0 950.7 L1384.0 951.2 L1387.0 951.7 L1390.0 952.2 L1393.0 952.7 L1396.0 953.2 L1398.9 953.7 L1401.9 954.2 L1404.9 954.7 L1407.9 955.3 L1410.9 955.8 L1413.9 956.4 L1416.9 956.9 L1419.9 957.5 L1422.8 958.0 L1425.8 958.6 L1428.8 959.2 L1431.8 959.8 L1434.8 960.4 L1437.7 961.0 L1440.7 961.6 L1443.7 962.2 L1446.7 962.8 L1449.6 963.4 L1452.6 964.0 L1455.6 964.6 L1458.6 965.3 L1461.5 965.9 L1464.5 966.5 L1467.5 967.2 L1470.4 967.8 L1473.4 968.5 L1476.4 969.1 L1479.3 969.8 L1482.3 970.5 L1485.3 971.1 L1488.2 971.8 L1491.2 972.5 L1494.1 973.2 L1497.1 973.8 L1500.1 974.5 L1503.0 975.2 L1506.0 975.9 L1508.9 976.6 L1511.9 977.3 L1514.8 978.0 L1517.8 978.7 L1520.7 979.4 L1523.7 980.1 L1526.6 980.8 L1529.6 981.5 L1532.5 982.2 L1535.5 983.0 L1538.4 983.7 L1541.3 984.4 L1544.3 985.1 L1547.2 985.8 L1550.2 986.6 L1553.1 987.3 L1556.0 988.0 L1559.0 988.7 L1561.9 989.5 L1564.8 990.2 L1567.7 990.9 L1570.7 991.7 L1573.6 992.4 L1483 1126.8 L1483.0 1126.8 L1480.1 1125.8 L1477.3 1124.8 L1474.4 1123.8 L1471.5 1122.8 L1468.6 1121.8 L1465.7 1120.9 L1462.8 1119.9 L1459.9 1119.0 L1457.0 1118.1 L1454.1 1117.2 L1451.2 1116.3 L1448.3 1115.5 L1445.4 1114.6 L1442.5 1113.8 L1439.6 1112.9 L1436.6 1112.1 L1433.7 1111.3 L1430.8 1110.6 L1427.9 1109.8 L1424.9 1109.1 L1422.0 1108.3 L1419.0 1107.6 L1416.1 1106.9 L1413.2 1106.2 L1410.2 1105.5 L1407.3 1104.9 L1404.3 1104.2 L1401.3 1103.6 L1398.4 1103.0 L1395.4 1102.4 L1392.5 1101.8 L1389.5 1101.2 L1386.5 1100.6 L1383.6 1100.1 L1380.6 1099.5 L1377.6 1099.0 L1374.6 1098.5 L1371.6 1098.0 L1368.7 1097.5 L1365.7 1097.0 L1362.7 1096.6 L1359.7 1096.1 L1356.7 1095.7 L1353.7 1095.3 L1350.7 1094.9 L1347.7 1094.5 L1344.7 1094.1 L1341.7 1093.8 L1338.7 1093.4 L1335.7 1093.1 L1332.7 1092.8 L1329.7 1092.5 L1326.7 1092.2 L1323.7 1091.9 L1320.7 1091.6 L1317.7 1091.4 L1314.7 1091.1 L1311.7 1090.9 L1308.7 1090.7 L1305.7 1090.5 L1302.7 1090.3 L1299.6 1090.1 L1296.6 1090.0 L1293.6 1089.8 L1290.6 1089.7 L1287.6 1089.6 L1284.6 1089.4 L1281.5 1089.3 L1278.5 1089.3 L1275.5 1089.2 L1272.5 1089.1 L1269.4 1089.1 L1266.4 1089.0 L1263.4 1089.0 L1260.4 1089.0 L1257.4 1089.0 L1254.3 1089.0 L1251.3 1089.0 L1248.3 1089.1 L1245.3 1089.1 L1242.2 1089.2 L1239.2 1089.3 L1236.2 1089.4 L1233.2 1089.5 L1230.2 1089.6 L1227.1 1089.7 L1224.1 1089.8 L1221.1 1090.0 L1218.1 1090.2 L1215.0 1090.3 L1212.0 1090.5 L1209.0 1090.7 L1206.0 1090.9 L1203.0 1091.1 L1199.9 1091.4 L1196.9 1091.6 L1193.9 1091.9 L1190.9 1092.2 L1187.9 1092.4 L1184.9 1092.7 L1181.9 1093.0 L1178.8 1093.3 L1175.8 1093.7 L1172.8 1094.0 L1169.8 1094.4 L1166.8 1094.7 L1163.8 1095.1 L1160.8 1095.5 L1157.8 1095.9 L1154.8 1096.3 L1151.8 1096.7 L1148.8 1097.1 L1145.8 1097.6 L1142.8 1098.0 L1139.8 1098.5 L1136.8 1099.0 L1133.8 1099.5 L1130.8 1100.0 L1127.8 1100.5 L1124.9 1101.0 L1121.9 1101.5 L1118.9 1102.1 L1115.9 1102.6 L1112.9 1103.2 L1110.0 1103.8 L1107.0 1104.3 L1104.0 1104.9 L1101.0 1105.5 L1098.1 1106.2 L1095.1 1106.8 L1092.2 1107.4 L1089.2 1108.1 L1086.2 1108.7 L1083.3 1109.4 L1080.3 1110.1 L1077.4 1110.8 L1074.4 1111.5 L1071.5 1112.2 Z" fill="#fff"/>
  <path d="M1153.2 472 L1273 472 L1843 463.6 L2700 489 L2700 662 L2632 661 L2632.0 660.5 L2628.1 660.6 L2624.1 660.6 L2620.2 660.7 L2616.2 660.8 L2612.3 660.8 L2608.3 660.9 L2604.4 661.0 L2600.4 661.0 L2596.5 661.1 L2592.5 661.1 L2588.6 661.2 L2584.6 661.2 L2580.6 661.3 L2576.7 661.3 L2572.7 661.4 L2568.7 661.4 L2564.8 661.5 L2560.8 661.5 L2556.8 661.6 L2552.8 661.6 L2548.9 661.7 L2544.9 661.7 L2540.9 661.8 L2536.9 661.8 L2532.9 661.8 L2528.9 661.9 L2524.9 661.9 L2520.9 662.0 L2516.9 662.0 L2512.9 662.1 L2508.9 662.1 L2504.9 662.2 L2500.9 662.2 L2496.9 662.3 L2492.9 662.3 L2488.9 662.4 L2484.9 662.4 L2480.9 662.5 L2476.9 662.6 L2472.9 662.6 L2468.9 662.7 L2464.9 662.7 L2460.9 662.8 L2456.8 662.9 L2452.8 663.0 L2448.8 663.0 L2444.8 663.1 L2440.8 663.2 L2436.8 663.3 L2432.7 663.3 L2428.7 663.4 L2424.7 663.5 L2420.7 663.6 L2416.6 663.7 L2412.6 663.8 L2408.6 663.9 L2404.6 664.0 L2400.5 664.1 L2396.5 664.3 L2392.5 664.4 L2388.5 664.5 L2384.4 664.6 L2380.4 664.8 L2376.4 664.9 L2372.4 665.0 L2368.3 665.2 L2364.3 665.3 L2360.3 665.5 L2356.2 665.6 L2352.2 665.8 L2348.2 666.0 L2344.1 666.2 L2340.1 666.3 L2336.1 666.5 L2332.1 666.7 L2328.0 666.9 L2324.0 667.1 L2320.0 667.3 L2315.9 667.5 L2311.9 667.8 L2307.9 668.0 L2303.8 668.2 L2299.8 668.5 L2295.8 668.7 L2291.8 669.0 L2287.7 669.2 L2283.7 669.5 L2279.7 669.8 L2275.7 670.1 L2271.6 670.4 L2267.6 670.7 L2263.6 671.0 L2259.6 671.3 L2255.5 671.6 L2251.5 671.9 L2247.5 672.3 L2243.5 672.6 L2239.5 673.0 L2235.4 673.3 L2231.4 673.7 L2227.4 674.1 L2223.4 674.5 L2219.4 674.9 L2215.4 675.3 L2211.4 675.7 L2207.4 676.1 L2203.3 676.5 L2199.3 677.0 L2195.3 677.4 L2191.3 677.9 L2187.3 678.4 L2183.3 678.8 L2179.3 679.3 L2175.3 679.8 L2171.3 680.3 L2167.3 680.9 L2163.3 681.4 L2159.3 681.9 L2155.3 682.5 L2151.4 683.1 L2147.4 683.6 L2143.4 684.2 L2139.4 684.8 L2135.4 685.4 L2131.4 686.0 L2127.5 686.7 L2123.5 687.3 L2119.5 688.0 L2115.5 688.6 L2111.6 689.3 L2107.6 690.0 L2103.6 690.7 L2099.7 691.4 L2095.7 692.1 L2091.7 692.8 L2087.8 693.6 L2083.8 694.4 L2079.9 695.1 L2075.9 695.9 L2072.0 696.7 L2068.0 697.5 L2064.1 698.4 L2060.2 699.2 L2056.2 700.0 L2052.3 700.9 L2048.4 701.8 L2044.4 702.7 L2040.5 703.6 L2036.6 704.5 L2032.7 705.4 L2028.7 706.4 L2024.8 707.3 L2020.9 708.3 L2017.0 709.3 L2013.1 710.3 L2009.2 711.3 L2005.3 712.4 L2001.4 713.4 L1997.5 714.5 L1993.6 715.5 L1989.7 716.6 L1985.9 717.7 L1982.0 718.8 L1978.1 719.9 L1974.3 721.1 L1970.4 722.2 L1966.5 723.4 L1962.7 724.6 L1958.8 725.8 L1955.0 727.0 L1951.1 728.2 L1947.3 729.4 L1943.5 730.7 L1939.7 732.0 L1935.8 733.2 L1932.0 734.5 L1928.2 735.8 L1924.4 737.2 L1920.6 738.5 L1916.8 739.8 L1913.0 741.2 L1909.3 742.6 L1905.5 744.0 L1901.7 745.4 L1897.9 746.8 L1894.2 748.2 L1890.4 749.6 L1886.7 751.1 L1882.9 752.6 L1879.2 754.1 L1875.5 755.6 L1871.8 757.1 L1868.1 758.6 L1864.3 760.1 L1860.6 761.7 L1857.0 763.3 L1853.3 764.9 L1849.6 766.4 L1845.9 768.1 L1842.2 769.7 L1838.6 771.3 L1834.9 773.0 L1831.3 774.6 L1827.7 776.3 L1824.0 778.0 L1820.4 779.7 L1816.8 781.5 L1813.2 783.2 L1809.6 784.9 L1806.0 786.7 L1802.4 788.5 L1798.9 790.3 L1795.3 792.1 L1791.7 793.9 L1788.2 795.7 L1784.7 797.6 L1781.1 799.5 L1777.6 801.3 L1774.1 803.2 L1770.6 805.1 L1767.1 807.1 L1763.6 809.0 L1760.1 810.9 L1756.7 812.9 L1753.2 814.9 L1749.8 816.9 L1746.3 818.9 L1742.9 820.9 L1739.5 822.9 L1736.1 825.0 L1732.6 827.0 L1729.3 829.1 L1725.9 831.2 L1722.5 833.3 L1719.1 835.4 L1715.8 837.6 L1712.5 839.7 L1709.1 841.9 L1705.8 844.1 L1702.5 846.2 L1699.2 848.4 L1695.9 850.7 L1692.6 852.9 L1689.4 855.1 L1686.1 857.4 L1682.9 859.7 L1679.6 862.0 L1676.4 864.3 L1673.2 866.6 L1670.0 868.9 L1666.8 871.3 L1663.7 873.6 L1660.5 876.0 L1657.3 878.4 L1654.2 880.8 L1651.1 883.2 L1648.0 885.7 L1644.8 888.1 L1641.8 890.6 L1638.7 893.0 L1635.6 895.5 L1632.6 898.0 L1629.5 900.6 L1626.5 903.1 L1623.5 905.6 L1620.5 908.2 L1617.5 910.8 L1614.5 913.4 L1611.5 916.0 L1608.6 918.6 L1605.6 921.2 L1602.7 923.9 L1599.8 926.5 L1596.9 929.2 L1594.0 931.9 L1591.1 934.6 L1588.3 937.3 L1585.4 940.1 L1582.6 942.8 L1579.8 945.6 L1577.0 948.4 L1574.2 951.2 L1571.4 954.0 L1568.7 956.8 L1565.9 959.6 L1563.2 962.5 L1560.5 965.4 L1557.8 968.2 L1555.1 971.1 L1552.4 974.0 L1549.8 977.0 L1547.1 979.9 L1544.5 982.9 L1541.9 985.8 L1539.3 988.8 L1536.7 991.8 L1534.1 994.8 L1531.6 997.9 L1529.0 1000.9 L1526.5 1003.9 L1524.0 1007.0 L1521.5 1010.1 L1519.0 1013.2 L1516.6 1016.3 L1514.1 1019.4 L1511.7 1022.5 L1509.3 1025.7 L1506.9 1028.9 L1504.5 1032.0 L1502.1 1035.2 L1499.7 1038.4 L1497.4 1041.6 L1495.1 1044.8 L1492.7 1048.1 L1490.4 1051.3 L1488.1 1054.6 L1485.9 1057.9 L1483.6 1061.1 L1481.3 1064.4 L1479.1 1067.7 L1476.9 1071.1 L1474.7 1074.4 L1472.5 1077.7 L1470.3 1081.1 L1468.2 1084.4 L1466.0 1087.8 L1463.9 1091.2 L1461.7 1094.6 L1459.6 1098.0 L1457.5 1101.4 L1455.4 1104.8 L1453.4 1108.3 L1451.3 1111.7 L1449.3 1115.2 L1447.3 1118.6 L1445.2 1122.1 L1443.2 1125.6 L1441.2 1129.1 L1439.3 1132.6 L1437.3 1136.1 L1435.4 1139.6 L1433.4 1143.2 L1431.5 1146.7 L1429.6 1150.3 L1427.7 1153.8 L1425.8 1157.4 L1423.9 1161.0 L1422.1 1164.5 L1420.2 1168.1 L1418.4 1171.7 L1416.6 1175.3 L1414.8 1179.0 L1413.0 1182.6 L1411.2 1186.2 L1409.4 1189.9 L1407.7 1193.5 L1405.9 1197.2 L1404.2 1200.8 L1402.5 1204.5 L1400.8 1208.2 L1399.1 1211.9 L1397.4 1215.5 L1395.7 1219.2 L1394.1 1222.9 L1392.4 1226.7 L1390.8 1230.4 L1389.2 1234.1 L1387.6 1237.8 L1386.0 1241.6 L1384.4 1245.3 L1382.8 1249.0 L1381.3 1252.8 L1379.7 1256.5 L1378.2 1260.3 L1376.7 1264.1 L1375.2 1267.8 L1373.7 1271.6 L1372.2 1275.4 L1370.7 1279.2 L1369.2 1283.0 L1367.8 1286.8 L1366.3 1290.6 L1364.9 1294.4 L1363.5 1298.2 L1362.1 1302.0 L1360.7 1305.8 L1359.3 1309.7 L1357.9 1313.5 L1356.6 1317.3 L1355.2 1321.2 L1353.9 1325.0 L1352.5 1328.8 L1351.2 1332.7 L1349.9 1336.5 L1348.6 1340.4 L1347.3 1344.2 L1346.1 1348.1 L1344.8 1352.0 L1343.6 1355.8 L1342.3 1359.7 L1341.1 1363.6 L1339.9 1367.4 L1338.7 1371.3 L1337.5 1375.2 L1336.3 1379.0 L1335.1 1382.9 L1333.9 1386.8 L1332.8 1390.7 L1331.6 1394.6 L1330.5 1398.4 L1329.4 1402.3 L1328.3 1406.2 L1327.2 1410.1 L1326.1 1414.0 L1325.0 1417.9 L1323.9 1421.8 L1322.9 1425.7 L1321.8 1429.6 L1320.8 1433.5 L1319.7 1437.4 L1318.7 1441.2 L1317.7 1445.1 L1316.7 1449.0 L1315.7 1452.9 L1314.7 1456.8 L1313.7 1460.7 L1312.8 1464.6 L1311.8 1468.5 L1310.8 1472.5 L1309.9 1476.4 L1308.9 1480.3 L1308.0 1484.2 L1307.1 1488.1 L1306.2 1492.0 L1305.3 1495.9 L1304.4 1499.8 L1303.5 1503.7 L1302.6 1507.6 L1301.7 1511.5 L1300.8 1515.4 L1299.9 1519.4 L1299.1 1523.3 L1298.2 1527.2 L1297.4 1531.1 L1296.5 1535.0 L1295.7 1538.9 L1294.8 1542.8 L1294.0 1546.8 L1293.2 1550.7 L1292.4 1554.6 L1291.6 1558.5 L1290.8 1562.4 L1289.9 1566.3 L1289.2 1570.3 L1288.4 1574.2 L1287.6 1578.1 L1286.8 1582.0 L1286.0 1585.9 L1285.2 1589.9 L1284.5 1593.8 L1283.7 1597.7 L1282.9 1601.6 L1282.2 1605.5 L1281.4 1609.5 L1280.6 1613.4 L1279.9 1617.3 L1279.1 1621.2 L1278.4 1625.1 L1277.7 1629.1 L1276.9 1633.0 L1276.2 1636.9 L1275.4 1640.8 L1274.7 1644.7 L1274.0 1648.7 L1273.2 1652.6 L1272.5 1656.5 L1271.8 1660.4 L1271.1 1664.3 L1270.3 1668.3 L1269.6 1672.2 L1268.9 1676.1 L1268.2 1680.0 L1267.4 1683.9 L1266.7 1687.9 L1266.0 1691.8 L1265.3 1695.7 L1264.6 1699.6 L1263.9 1703.5 L1263.1 1707.5 L1262.4 1711.4 L1261.7 1715.3 L1261.0 1719.2 L1260.3 1723.1 L1259.5 1727.0 L1258.8 1730.9 L1258.1 1734.9 L1257.4 1738.8 L1256.7 1742.7 L1255.9 1746.6 L1255.2 1750.5 L1254.5 1754.4 L1253.7 1758.3 L1253.0 1762.2 L1252.3 1766.1 L1251.5 1770.1 L1250.8 1774.0 L1250.1 1777.9 L1249.3 1781.8 L1248.6 1785.7 L1247.8 1789.6 L1247.1 1793.5 L1246.3 1797.4 L1245.5 1801.3 L1244.8 1805.2 L1244.0 1809.1 L1243.2 1813.0 L1242.5 1816.9 L1241.7 1820.8 L1240.9 1824.7 L1240.1 1828.6 L1239.3 1832.5 L1238.5 1836.4 L1237.7 1840.3 L1236.9 1844.1 L1236.0 1848.0 L1235.2 1851.9 L1234.4 1855.8 L1233.5 1859.7 L1232.7 1863.6 L1231.8 1867.5 L1230.9 1871.3 L1230.1 1875.2 L1229.2 1879.1 L1228.3 1883.0 L1227.4 1886.8 L1226.5 1890.7 L1225.6 1894.6 L1224.7 1898.5 L1223.7 1902.3 L1222.8 1906.2 L1221.9 1910.1 L1220.9 1913.9 L1219.9 1917.8 L1219.0 1921.7 L1218.0 1925.5 L1217.0 1929.4 L1216.0 1933.2 L1215.0 1937.1 L1213.9 1940.9 L1212.9 1944.8 L1211.8 1948.6 L1210.8 1952.5 L1209.7 1956.3 L1208.6 1960.2 L1207.5 1964.0 L1206.4 1967.9 L1205.3 1971.7 L1204.2 1975.5 L1203.0 1979.4 L1201.9 1983.2 L1200.7 1987.0 L1199.5 1990.9 L1198.3 1994.7 L1197.1 1998.5 L1195.9 2002.3 L1194.6 2006.1 L1193.4 2010.0 L1192.1 2013.8 L1190.8 2017.6 L1189.5 2021.4 L1188.2 2025.2 L1186.9 2029.0 L1185.5 2032.8 L1184.2 2036.6 L1182.8 2040.4 L1181.4 2044.2 L1180.0 2048.0 L1168 2075 L1046 2075 L1045.2 2048.0 L1045.1 2045.0 L1045.1 2042.0 L1045.0 2039.0 L1045.0 2036.0 L1044.9 2033.0 L1044.9 2030.0 L1044.9 2027.0 L1044.9 2024.0 L1044.9 2020.9 L1044.9 2017.9 L1044.9 2014.9 L1045.0 2011.9 L1045.0 2008.9 L1045.1 2005.9 L1045.1 2002.9 L1045.2 1999.9 L1045.2 1996.9 L1045.3 1993.9 L1045.4 1990.9 L1045.5 1987.9 L1045.6 1984.9 L1045.7 1981.9 L1045.8 1978.9 L1045.9 1975.9 L1046.0 1972.9 L1046.1 1969.9 L1046.2 1966.9 L1046.3 1963.8 L1046.4 1960.8 L1046.6 1957.8 L1046.7 1954.8 L1046.8 1951.8 L1046.9 1948.8 L1047.1 1945.8 L1047.2 1942.8 L1047.3 1939.8 L1047.5 1936.8 L1047.6 1933.8 L1047.7 1930.8 L1047.9 1927.8 L1048.0 1924.8 L1048.2 1921.8 L1048.3 1918.8 L1048.5 1915.8 L1048.6 1912.8 L1048.8 1909.8 L1048.9 1906.8 L1049.1 1903.8 L1049.2 1900.8 L1049.4 1897.8 L1049.5 1894.8 L1049.7 1891.8 L1049.8 1888.8 L1050.0 1885.7 L1050.2 1882.7 L1050.3 1879.7 L1050.5 1876.7 L1050.7 1873.7 L1050.8 1870.7 L1051.0 1867.7 L1051.2 1864.7 L1051.3 1861.7 L1051.5 1858.7 L1051.7 1855.7 L1051.9 1852.7 L1052.1 1849.7 L1052.2 1846.7 L1052.4 1843.7 L1052.6 1840.7 L1052.8 1837.7 L1053.0 1834.7 L1053.2 1831.7 L1053.3 1828.7 L1053.5 1825.7 L1053.7 1822.7 L1053.9 1819.7 L1054.1 1816.7 L1054.3 1813.7 L1054.5 1810.7 L1054.7 1807.7 L1054.9 1804.7 L1055.1 1801.7 L1055.3 1798.7 L1055.5 1795.7 L1055.7 1792.7 L1055.9 1789.7 L1056.1 1786.7 L1056.3 1783.7 L1056.5 1780.7 L1056.7 1777.7 L1056.9 1774.7 L1057.2 1771.7 L1057.4 1768.7 L1057.6 1765.7 L1057.8 1762.7 L1058.0 1759.7 L1058.2 1756.7 L1058.4 1753.7 L1058.7 1750.6 L1058.9 1747.6 L1059.1 1744.6 L1059.3 1741.6 L1059.6 1738.6 L1059.8 1735.6 L1060.0 1732.6 L1060.2 1729.6 L1060.4 1726.6 L1060.7 1723.6 L1060.9 1720.6 L1061.1 1717.6 L1061.4 1714.6 L1061.6 1711.6 L1061.8 1708.6 L1062.1 1705.6 L1062.3 1702.6 L1062.5 1699.6 L1062.8 1696.6 L1063.0 1693.6 L1063.2 1690.6 L1063.5 1687.6 L1063.7 1684.6 L1063.9 1681.6 L1064.2 1678.6 L1064.4 1675.6 L1064.7 1672.6 L1064.9 1669.6 L1065.1 1666.6 L1065.4 1663.6 L1065.6 1660.6 L1065.9 1657.6 L1066.1 1654.6 L1066.4 1651.6 L1066.6 1648.6 L1066.8 1645.6 L1067.1 1642.6 L1067.3 1639.6 L1067.6 1636.6 L1067.8 1633.6 L1068.1 1630.6 L1068.3 1627.6 L1068.6 1624.6 L1068.8 1621.6 L1069.1 1618.6 L1069.3 1615.6 L1069.6 1612.6 L1069.8 1609.6 L1070.1 1606.6 L1070.3 1603.6 L1070.6 1600.6 L1070.8 1597.6 L1071.1 1594.6 L1071.3 1591.6 L1071.6 1588.6 L1071.9 1585.6 L1072.1 1582.6 L1072.4 1579.6 L1072.6 1576.6 L1072.9 1573.6 L1073.1 1570.6 L1073.4 1567.6 L1073.6 1564.6 L1073.9 1561.6 L1074.2 1558.6 L1074.4 1555.6 L1074.7 1552.6 L1074.9 1549.6 L1075.2 1546.6 L1075.4 1543.6 L1075.7 1540.6 L1076.0 1537.6 L1076.2 1534.6 L1076.5 1531.6 L1076.7 1528.6 L1077.0 1525.6 L1077.3 1522.6 L1077.5 1519.6 L1077.8 1516.6 L1078.0 1513.6 L1078.3 1510.6 L1078.5 1507.6 L1078.8 1504.6 L1079.1 1501.6 L1079.3 1498.6 L1079.6 1495.6 L1079.8 1492.6 L1080.1 1489.6 L1080.4 1486.6 L1080.6 1483.6 L1080.9 1480.6 L1081.1 1477.6 L1081.4 1474.6 L1081.7 1471.6 L1081.9 1468.6 L1082.2 1465.6 L1082.4 1462.6 L1082.7 1459.6 L1082.9 1456.6 L1083.2 1453.6 L1083.5 1450.6 L1083.7 1447.6 L1084.0 1444.6 L1084.2 1441.6 L1084.5 1438.6 L1084.7 1435.6 L1085.0 1432.6 L1085.2 1429.6 L1085.5 1426.6 L1085.8 1423.6 L1086.0 1420.6 L1086.3 1417.6 L1086.5 1414.6 L1086.8 1411.6 L1087.0 1408.6 L1087.3 1405.6 L1087.5 1402.6 L1087.8 1399.6 L1088.0 1396.6 L1088.3 1393.6 L1088.5 1390.6 L1088.8 1387.6 L1089.0 1384.6 L1089.3 1381.6 L1089.5 1378.6 L1089.8 1375.6 L1090.0 1372.6 L1090.3 1369.6 L1090.5 1366.6 L1090.8 1363.6 L1091.0 1360.6 L1091.3 1357.6 L1091.5 1354.6 L1091.7 1351.6 L1092.0 1348.6 L1092.2 1345.6 L1092.5 1342.6 L1092.7 1339.6 L1093.0 1336.6 L1093.2 1333.6 L1093.5 1330.6 L1093.7 1327.6 L1093.9 1324.6 L1094.2 1321.6 L1094.4 1318.6 L1094.7 1315.6 L1094.9 1312.6 L1095.1 1309.6 L1095.4 1306.6 L1095.6 1303.6 L1095.9 1300.6 L1096.1 1297.6 L1096.3 1294.6 L1096.6 1291.6 L1096.8 1288.6 L1097.0 1285.6 L1097.3 1282.6 L1097.5 1279.6 L1097.7 1276.6 L1098.0 1273.6 L1098.2 1270.6 L1098.5 1267.6 L1098.7 1264.6 L1098.9 1261.6 L1099.2 1258.6 L1099.4 1255.6 L1099.6 1252.6 L1099.9 1249.6 L1100.1 1246.6 L1100.3 1243.6 L1100.5 1240.6 L1100.8 1237.6 L1101.0 1234.6 L1101.2 1231.6 L1101.5 1228.6 L1101.7 1225.6 L1101.9 1222.6 L1102.2 1219.6 L1102.4 1216.6 L1102.6 1213.6 L1102.8 1210.6 L1103.1 1207.6 L1103.3 1204.6 L1103.5 1201.6 L1103.7 1198.6 L1104.0 1195.6 L1104.2 1192.6 L1104.4 1189.6 L1104.7 1186.6 L1104.9 1183.6 L1105.1 1180.6 L1105.3 1177.6 L1105.6 1174.6 L1105.8 1171.6 L1106.0 1168.6 L1106.2 1165.6 L1106.4 1162.6 L1106.7 1159.6 L1106.9 1156.6 L1107.1 1153.6 L1107.3 1150.6 L1107.6 1147.6 L1107.8 1144.6 L1108.0 1141.6 L1108.2 1138.6 L1108.4 1135.6 L1108.7 1132.6 L1108.9 1129.6 L1109.1 1126.6 L1109.3 1123.6 L1109.5 1120.6 L1109.8 1117.5 L1110.0 1114.5 L1110.2 1111.5 L1110.4 1108.5 L1110.6 1105.5 L1110.8 1102.5 L1111.1 1099.5 L1111.3 1096.5 L1111.5 1093.5 L1111.7 1090.5 L1111.9 1087.5 L1112.1 1084.5 L1112.4 1081.5 L1112.6 1078.5 L1112.8 1075.5 L1113.0 1072.5 L1113.2 1069.5 L1113.4 1066.5 L1113.7 1063.5 L1113.9 1060.5 L1114.1 1057.5 L1114.3 1054.5 L1114.5 1051.5 L1114.7 1048.5 L1114.9 1045.5 L1115.1 1042.5 L1115.4 1039.5 L1115.6 1036.5 L1115.8 1033.5 L1116.0 1030.5 L1116.2 1027.5 L1116.4 1024.5 L1116.6 1021.5 L1116.8 1018.5 L1117.0 1015.5 L1117.3 1012.5 L1117.5 1009.5 L1117.7 1006.5 L1117.9 1003.5 L1118.1 1000.5 L1118.3 997.5 L1118.5 994.5 L1118.7 991.5 L1118.9 988.5 L1119.1 985.5 L1119.3 982.5 L1119.6 979.5 L1119.8 976.5 L1120.0 973.5 L1120.2 970.5 L1120.4 967.5 L1120.6 964.5 L1120.8 961.5 L1121.0 958.5 L1121.2 955.5 L1121.4 952.5 L1121.6 949.5 L1121.8 946.5 L1122.0 943.5 L1122.2 940.5 L1122.4 937.5 L1122.7 934.5 L1122.9 931.5 L1123.1 928.5 L1123.3 925.5 L1123.5 922.5 L1123.7 919.4 L1123.9 916.4 L1124.1 913.4 L1124.3 910.4 L1124.5 907.4 L1124.7 904.4 L1124.9 901.4 L1125.1 898.4 L1125.3 895.4 L1125.5 892.4 L1125.7 889.4 L1125.9 886.4 L1126.1 883.4 L1126.3 880.4 L1126.5 877.4 L1126.7 874.4 L1126.9 871.4 L1127.1 868.4 L1127.3 865.4 L1127.5 862.4 L1127.7 859.4 L1127.9 856.4 L1128.1 853.4 L1128.3 850.4 L1128.5 847.4 L1128.7 844.4 L1128.9 841.4 L1129.1 838.4 L1129.3 835.4 L1129.5 832.4 L1129.7 829.4 L1129.9 826.4 L1130.1 823.4 L1130.3 820.4 L1130.5 817.4 L1130.7 814.4 L1130.9 811.4 L1131.1 808.4 L1131.3 805.4 L1131.5 802.4 L1131.7 799.4 L1131.9 796.4 L1132.1 793.4 L1132.3 790.4 L1132.5 787.4 L1132.7 784.3 L1132.9 781.3 L1133.1 778.3 L1133.3 775.3 L1133.5 772.3 L1133.7 769.3 L1133.9 766.3 L1134.1 763.3 L1134.3 760.3 L1134.5 757.3 L1134.7 754.3 L1134.9 751.3 L1135.1 748.3 L1135.3 745.3 L1135.5 742.3 L1135.7 739.3 L1135.9 736.3 L1136.1 733.3 L1136.3 730.3 L1136.5 727.3 L1136.7 724.3 L1136.9 721.3 L1137.1 718.3 L1137.3 715.3 L1137.5 712.3 L1137.7 709.3 L1137.9 706.3 L1138.1 703.3 L1138.3 700.3 L1138.5 697.3 L1138.7 694.3 L1138.9 691.3 L1139.0 688.3 L1139.2 685.3 L1139.4 682.3 L1139.6 679.3 L1139.8 676.2 L1140.0 673.2 L1140.2 670.2 L1140.4 667.2 L1140.6 664.2 L1140.8 661.2 L1141.0 658.2 L1141.2 655.2 L1141.4 652.2 L1141.6 649.2 L1141.8 646.2 L1142.0 643.2 L1142.2 640.2 L1142.4 637.2 L1142.6 634.2 L1142.8 631.2 L1143.0 628.2 L1143.2 625.2 L1143.4 622.2 L1143.6 619.2 L1143.8 616.2 L1144.0 613.2 L1144.1 610.2 L1144.3 607.2 L1144.5 604.2 L1144.7 601.2 L1144.9 598.2 L1145.1 595.2 L1145.3 592.2 L1145.5 589.2 L1145.7 586.1 L1145.9 583.1 L1146.1 580.1 L1146.3 577.1 L1146.5 574.1 L1146.7 571.1 L1146.9 568.1 L1147.1 565.1 L1147.3 562.1 L1147.5 559.1 L1147.7 556.1 L1147.9 553.1 L1148.1 550.1 L1148.3 547.1 L1148.5 544.1 L1148.7 541.1 L1148.9 538.1 L1149.1 535.1 L1149.3 532.1 L1149.5 529.1 L1149.6 526.1 L1149.8 523.1 L1150.0 520.1 L1150.2 517.1 L1150.4 514.1 L1150.6 511.1 L1150.8 508.0 L1151.0 505.0 L1151.2 502.0 L1151.4 499.0 L1151.6 496.0 L1151.8 493.0 L1152.0 490.0 L1152.2 487.0 L1152.4 484.0 L1152.6 481.0 L1152.8 478.0 L1153.0 475.0 L1153.2 472.0 Z" fill="#000"/>
  <!-- selection -->
  <rect x="1071.8" y="939" width="502" height="188" fill="none" stroke="rgba(45,130,230,0.62)" stroke-width="1.7"/>
  <line x1="1322.8" y1="939" x2="1322.8" y2="879" stroke="rgba(45,130,230,0.62)" stroke-width="1.7"/>
  <path d="M1085.9 954.9 L1085.9 954.9 L1088.9 954.2 L1091.9 953.5 L1094.9 952.8 L1097.9 952.1 L1101.0 951.5 L1104.0 950.8 L1107.0 950.2 L1110.0 949.6 L1113.0 949.0 L1116.0 948.5 L1119.0 947.9 L1122.1 947.4 L1125.1 946.9 L1128.1 946.4 L1131.1 945.9 L1134.1 945.4 L1137.1 945.0 L1140.2 944.5 L1143.2 944.1 L1146.2 943.7 L1149.2 943.3 L1152.2 942.9 L1155.2 942.5 L1158.3 942.2 L1161.3 941.9 L1164.3 941.5 L1167.3 941.2 L1170.3 940.9 L1173.3 940.7 L1176.4 940.4 L1179.4 940.2 L1182.4 939.9 L1185.4 939.7 L1188.4 939.5 L1191.4 939.3 L1194.5 939.1 L1197.5 939.0 L1200.5 938.8 L1203.5 938.7 L1206.5 938.6 L1209.5 938.5 L1212.6 938.4 L1215.6 938.3 L1218.6 938.2 L1221.6 938.1 L1224.6 938.1 L1227.6 938.1 L1230.7 938.0 L1233.7 938.0 L1236.7 938.0 L1239.7 938.1 L1242.7 938.1 L1245.7 938.1 L1248.7 938.2 L1251.8 938.2 L1254.8 938.3 L1257.8 938.4 L1260.8 938.5 L1263.8 938.6 L1266.8 938.7 L1269.8 938.9 L1272.9 939.0 L1275.9 939.2 L1278.9 939.3 L1281.9 939.5 L1284.9 939.7 L1287.9 939.9 L1290.9 940.1 L1293.9 940.3 L1296.9 940.5 L1299.9 940.8 L1303.0 941.0 L1306.0 941.3 L1309.0 941.6 L1312.0 941.8 L1315.0 942.1 L1318.0 942.4 L1321.0 942.7 L1324.0 943.1 L1327.0 943.4 L1330.0 943.7 L1333.0 944.1 L1336.0 944.4 L1339.0 944.8 L1342.0 945.1 L1345.0 945.5 L1348.0 945.9 L1351.0 946.3 L1354.0 946.7 L1357.0 947.1 L1360.0 947.5 L1363.0 948.0 L1366.0 948.4 L1369.0 948.8 L1372.0 949.3 L1375.0 949.8 L1378.0 950.2 L1381.0 950.7 L1384.0 951.2 L1387.0 951.7 L1390.0 952.2 L1393.0 952.7 L1396.0 953.2 L1398.9 953.7 L1401.9 954.2 L1404.9 954.7 L1407.9 955.3 L1410.9 955.8 L1413.9 956.4 L1416.9 956.9 L1419.9 957.5 L1422.8 958.0 L1425.8 958.6 L1428.8 959.2 L1431.8 959.8 L1434.8 960.4 L1437.7 961.0 L1440.7 961.6 L1443.7 962.2 L1446.7 962.8 L1449.6 963.4 L1452.6 964.0 L1455.6 964.6 L1458.6 965.3 L1461.5 965.9 L1464.5 966.5 L1467.5 967.2 L1470.4 967.8 L1473.4 968.5 L1476.4 969.1 L1479.3 969.8 L1482.3 970.5 L1485.3 971.1 L1488.2 971.8 L1491.2 972.5 L1494.1 973.2 L1497.1 973.8 L1500.1 974.5 L1503.0 975.2 L1506.0 975.9 L1508.9 976.6 L1511.9 977.3 L1514.8 978.0 L1517.8 978.7 L1520.7 979.4 L1523.7 980.1 L1526.6 980.8 L1529.6 981.5 L1532.5 982.2 L1535.5 983.0 L1538.4 983.7 L1541.3 984.4 L1544.3 985.1 L1547.2 985.8 L1550.2 986.6 L1553.1 987.3 L1556.0 988.0 L1559.0 988.7 L1561.9 989.5 L1564.8 990.2 L1567.7 990.9 L1570.7 991.7 L1573.6 992.4 L1483 1126.8 L1483.0 1126.8 L1480.1 1125.8 L1477.3 1124.8 L1474.4 1123.8 L1471.5 1122.8 L1468.6 1121.8 L1465.7 1120.9 L1462.8 1119.9 L1459.9 1119.0 L1457.0 1118.1 L1454.1 1117.2 L1451.2 1116.3 L1448.3 1115.5 L1445.4 1114.6 L1442.5 1113.8 L1439.6 1112.9 L1436.6 1112.1 L1433.7 1111.3 L1430.8 1110.6 L1427.9 1109.8 L1424.9 1109.1 L1422.0 1108.3 L1419.0 1107.6 L1416.1 1106.9 L1413.2 1106.2 L1410.2 1105.5 L1407.3 1104.9 L1404.3 1104.2 L1401.3 1103.6 L1398.4 1103.0 L1395.4 1102.4 L1392.5 1101.8 L1389.5 1101.2 L1386.5 1100.6 L1383.6 1100.1 L1380.6 1099.5 L1377.6 1099.0 L1374.6 1098.5 L1371.6 1098.0 L1368.7 1097.5 L1365.7 1097.0 L1362.7 1096.6 L1359.7 1096.1 L1356.7 1095.7 L1353.7 1095.3 L1350.7 1094.9 L1347.7 1094.5 L1344.7 1094.1 L1341.7 1093.8 L1338.7 1093.4 L1335.7 1093.1 L1332.7 1092.8 L1329.7 1092.5 L1326.7 1092.2 L1323.7 1091.9 L1320.7 1091.6 L1317.7 1091.4 L1314.7 1091.1 L1311.7 1090.9 L1308.7 1090.7 L1305.7 1090.5 L1302.7 1090.3 L1299.6 1090.1 L1296.6 1090.0 L1293.6 1089.8 L1290.6 1089.7 L1287.6 1089.6 L1284.6 1089.4 L1281.5 1089.3 L1278.5 1089.3 L1275.5 1089.2 L1272.5 1089.1 L1269.4 1089.1 L1266.4 1089.0 L1263.4 1089.0 L1260.4 1089.0 L1257.4 1089.0 L1254.3 1089.0 L1251.3 1089.0 L1248.3 1089.1 L1245.3 1089.1 L1242.2 1089.2 L1239.2 1089.3 L1236.2 1089.4 L1233.2 1089.5 L1230.2 1089.6 L1227.1 1089.7 L1224.1 1089.8 L1221.1 1090.0 L1218.1 1090.2 L1215.0 1090.3 L1212.0 1090.5 L1209.0 1090.7 L1206.0 1090.9 L1203.0 1091.1 L1199.9 1091.4 L1196.9 1091.6 L1193.9 1091.9 L1190.9 1092.2 L1187.9 1092.4 L1184.9 1092.7 L1181.9 1093.0 L1178.8 1093.3 L1175.8 1093.7 L1172.8 1094.0 L1169.8 1094.4 L1166.8 1094.7 L1163.8 1095.1 L1160.8 1095.5 L1157.8 1095.9 L1154.8 1096.3 L1151.8 1096.7 L1148.8 1097.1 L1145.8 1097.6 L1142.8 1098.0 L1139.8 1098.5 L1136.8 1099.0 L1133.8 1099.5 L1130.8 1100.0 L1127.8 1100.5 L1124.9 1101.0 L1121.9 1101.5 L1118.9 1102.1 L1115.9 1102.6 L1112.9 1103.2 L1110.0 1103.8 L1107.0 1104.3 L1104.0 1104.9 L1101.0 1105.5 L1098.1 1106.2 L1095.1 1106.8 L1092.2 1107.4 L1089.2 1108.1 L1086.2 1108.7 L1083.3 1109.4 L1080.3 1110.1 L1077.4 1110.8 L1074.4 1111.5 L1071.5 1112.2 Z" fill="none" stroke="#2a80e6" stroke-width="2.2"/>
  <g fill="#fff" stroke="#3483e0" stroke-width="2">
    <circle cx="1071.8" cy="939" r="7"/><circle cx="1322.8" cy="939" r="7"/><circle cx="1573.8" cy="939" r="7"/>
    <circle cx="1071.8" cy="1033" r="7"/><circle cx="1573.8" cy="1033" r="7"/>
    <circle cx="1071.8" cy="1127" r="7"/><circle cx="1322.8" cy="1127" r="7"/><circle cx="1573.8" cy="1127" r="7"/>
    <circle cx="1322.8" cy="879" r="7"/>
  </g>
  <!-- touch puck -->
  <circle cx="347" cy="1805" r="61.6" fill="#666"/>
  <circle cx="347" cy="1805" r="54.3" fill="#b4b4b4"/>
  <circle cx="347" cy="1805" r="46.6" fill="#545454"/>
  <!-- home indicator -->
  <defs>
    <linearGradient id="hi" x1="1021" x2="1711" y1="0" y2="0" gradientUnits="userSpaceOnUse">
      <stop offset="0" stop-color="#161616"/>
      <stop offset="0.032" stop-color="#2e2e2e"/>
      <stop offset="0.085" stop-color="#484848"/>
      <stop offset="0.17" stop-color="#555"/>
      <stop offset="0.235" stop-color="#222"/>
      <stop offset="0.28" stop-color="#000"/>
      <stop offset="1" stop-color="#000"/>
    </linearGradient>
  </defs>
  <rect x="1021" y="2022" width="690" height="11" rx="5.5" fill="url(#hi)"/>
</svg>

<div style="position:absolute;left:17px;top:29px;width:95px;height:42px;background:#3e3e3e;border-radius:9px"></div><svg style="position:absolute;left:28px;top:38px" width="30" height="24" viewBox="0 0 30 24"><path d="M3 12 H28 M12 3 L3 12 L12 21" fill="none" stroke="#9a9a9a" stroke-width="2.6" stroke-linecap="round" stroke-linejoin="round"/></svg><svg style="position:absolute;left:67px;top:37px" width="33" height="26" viewBox="0 0 33 26"><rect x="0.0" y="0.0" width="8.6" height="6.8" rx="1.8" fill="#9a9a9a"/><rect x="11.4" y="0.0" width="8.6" height="6.8" rx="1.8" fill="#9a9a9a"/><rect x="22.8" y="0.0" width="8.6" height="6.8" rx="1.8" fill="#9a9a9a"/><rect x="0.0" y="9.2" width="8.6" height="6.8" rx="1.8" fill="#9a9a9a"/><rect x="11.4" y="9.2" width="8.6" height="6.8" rx="1.8" fill="#9a9a9a"/><rect x="22.8" y="9.2" width="8.6" height="6.8" rx="1.8" fill="#9a9a9a"/><rect x="0.0" y="18.4" width="8.6" height="6.8" rx="1.8" fill="#9a9a9a"/><rect x="11.4" y="18.4" width="8.6" height="6.8" rx="1.8" fill="#9a9a9a"/><rect x="22.8" y="18.4" width="8.6" height="6.8" rx="1.8" fill="#9a9a9a"/></svg><div style="position:absolute;left:130px;top:12px;width:76px;height:76px;background:#222;border-radius:16px"></div><svg style="position:absolute;left:144px;top:26px" width="48" height="48" viewBox="0 0 48 48"><defs><linearGradient id="ad" x1="0" y1="0" x2="0" y2="1"><stop offset="0" stop-color="#62dcfb"/><stop offset="1" stop-color="#30b4f7"/></linearGradient></defs>
<rect x="0" y="0" width="48" height="48" rx="8.5" fill="#1a64b3"/>
<rect x="4" y="4" width="40" height="40" rx="2.5" fill="url(#ad)"/>
<path d="M3 3 L17.3 3 L3.6 27.5 Z" fill="#1a64b3"/>
<path d="M26.7 3.5 L11.6 30.6 L19.6 44.5 M11.6 30.6 H44.5 M20.6 16.8 L28.6 30.6" fill="none" stroke="#1a5eae" stroke-width="1.9" stroke-linejoin="round"/></svg><div style="position:absolute;left:218px;top:18px;width:84px;height:64px;background:#454545;border-radius:14px;"><svg style="position:absolute;left:22px;top:17px" width="40" height="31" viewBox="0 0 40 31"><rect x="0" y="0" width="40" height="5" fill="#e0e0e0"/><rect x="0" y="12.5" width="40" height="5" fill="#e0e0e0"/><rect x="0" y="25" width="40" height="5" fill="#e0e0e0"/></svg></div><div style="position:absolute;left:314px;top:18px;width:84px;height:64px;background:#1b1b1b;border-radius:14px;box-shadow: inset 0 0 0 3px #3e3e3e;"><svg style="position:absolute;left:21px;top:26px" width="42" height="12" viewBox="0 0 42 12"><circle cx="6" cy="6" r="5.3" fill="#e0e0e0"/><circle cx="21" cy="6" r="5.3" fill="#e0e0e0"/><circle cx="36" cy="6" r="5.3" fill="#e0e0e0"/></svg></div><div style="position:absolute;left:410px;top:0;width:2px;height:99px;background:#000"></div><div style="position:absolute;left:422px;top:18px;width:84px;height:64px;background:#454545;border-radius:14px 14px 0 14px;"><svg style="position:absolute;right:0;bottom:0" width="16" height="16"><path d="M16 0 L16 16 L0 16 Z" fill="#6a6a6a"/></svg><svg style="position:absolute;left:32px;top:15px" width="22" height="34" viewBox="0 0 22 34"><path d="M1 1 L1 26 L7 21 L12 32 L17 30 L12 19.5 L21 19 Z" fill="#dcdcdc" stroke="#dcdcdc" stroke-width="1.2" stroke-linejoin="round"/></svg></div><div style="position:absolute;left:518px;top:18px;width:84px;height:64px;background:#222;border-radius:14px;box-shadow: inset 0 0 0 3px #434343;"><svg style="position:absolute;left:24px;top:13px" width="40" height="40" viewBox="0 0 40 40"><path d="M7 18 Q9 16 11 18 L11 22 L12 16 Q14 14 16 16 L16 22 L17 14.5 Q19 12.5 21 14.5 L21 22 L23 10 Q25 8 27 10 L26 26 L30 22 Q33 21 33 24 Q28 32 24 36 Q20 40 14 40 Q4 38 4 29 Q4 22 7 18 Z" fill="#dcdcdc"/><path d="M24 2 L25 7 M16 6 L20 9 M34 6 L29 9 M33 15 L29 13" stroke="#dcdcdc" stroke-width="1.8" stroke-linecap="round"/></svg></div><div style="position:absolute;left:614px;top:18px;width:188px;height:64px;background:#1f1f1f;border-radius:14px"></div><svg style="position:absolute;left:630px;top:42px" width="16" height="20" viewBox="0 0 16 20"><path d="M13 2 L3 10 L13 18" fill="none" stroke="#eee" stroke-width="2.2" stroke-linecap="round" stroke-linejoin="round"/></svg><svg style="position:absolute;left:770px;top:42px" width="16" height="20" viewBox="0 0 16 20"><path d="M3 2 L13 10 L3 18" fill="none" stroke="#eee" stroke-width="2.2" stroke-linecap="round" stroke-linejoin="round"/></svg><div style="position:absolute;left:660px;top:36px;width:96px;height:30px;text-align:center;font-size:24.5px;line-height:30px;color:#f2f2f2;letter-spacing:0.3px">Default</div><div style="position:absolute;left:815px;top:14px;width:2px;height:72px;background:#4a4a4a"></div><div style="position:absolute;left:1119px;top:14px;width:2px;height:72px;background:#4a4a4a"></div><div style="position:absolute;left:1231px;top:14px;width:2px;height:72px;background:#4a4a4a"></div><div style="position:absolute;left:830px;top:18px;width:84px;height:64px;background:#454545;border-radius:14px 14px 0 14px;"><svg style="position:absolute;right:0;bottom:0" width="16" height="16"><path d="M16 0 L16 16 L0 16 Z" fill="#6a6a6a"/></svg><svg style="position:absolute;left:24px;top:14px" width="37" height="37" viewBox="0 0 37 37"><rect x="7" y="7" width="22" height="22" rx="3" fill="#dcdcdc"/><rect x="0" y="0" width="14" height="14" rx="3" fill="#9b9b9b" stroke="#454545" stroke-width="1.6"/><rect x="22" y="22" width="14" height="14" rx="3" fill="#9b9b9b" stroke="#454545" stroke-width="1.6"/></svg></div><div style="position:absolute;left:926px;top:18px;width:84px;height:64px;background:#454545;border-radius:14px 14px 0 14px;"><svg style="position:absolute;right:0;bottom:0" width="16" height="16"><path d="M16 0 L16 16 L0 16 Z" fill="#6a6a6a"/></svg><svg style="position:absolute;left:23px;top:17px" width="38" height="34" viewBox="0 0 38 34"><path d="M17 1 L17 33 L1 33 Z" fill="#dcdcdc" stroke="#dcdcdc" stroke-width="1.5" stroke-linejoin="round"/><path d="M21 1 L21 33 L37 33 Z" fill="#9b9b9b" stroke="#9b9b9b" stroke-width="1.5" stroke-linejoin="round"/></svg></div><div style="position:absolute;left:1022px;top:18px;width:84px;height:64px;background:#454545;border-radius:14px 14px 0 14px;"><svg style="position:absolute;right:0;bottom:0" width="16" height="16"><path d="M16 0 L16 16 L0 16 Z" fill="#6a6a6a"/></svg><svg style="position:absolute;left:25px;top:14px" width="34" height="37" viewBox="0 0 34 37"><rect x="0.5" y="0" width="3.5" height="36" fill="#dcdcdc"/><rect x="6" y="7" width="18" height="8.5" rx="2.5" fill="#9b9b9b"/><rect x="6" y="20" width="27" height="9" rx="2.5" fill="#9b9b9b"/></svg></div><div style="position:absolute;left:1119px;top:14px;width:2px;height:72px;background:#4a4a4a"></div><div style="position:absolute;left:1134px;top:18px;width:84px;height:64px;background:#454545;border-radius:14px 14px 0 14px;"><svg style="position:absolute;right:0;bottom:0" width="16" height="16"><path d="M16 0 L16 16 L0 16 Z" fill="#6a6a6a"/></svg><svg style="position:absolute;left:23px;top:14px" width="40" height="40" viewBox="0 0 40 40"><rect x="1" y="0" width="25" height="25" rx="3" fill="#dcdcdc"/><circle cx="26" cy="26" r="12.5" fill="#dcdcdc" stroke="#454545" stroke-width="0"/><path d="M26 20 V32 M20 26 H32" stroke="#333" stroke-width="2.2"/></svg></div><div style="position:absolute;left:1262px;top:36px;width:78px;height:30px;text-align:center;font-size:24.5px;line-height:30px;color:#c6c6c6;letter-spacing:0.4px">Select</div><div style="position:absolute;left:1360px;top:18px;width:147px;height:64px;background:#454545;border-radius:14px 14px 0 14px;"><svg style="position:absolute;right:0;bottom:0" width="16" height="16"><path d="M16 0 L16 16 L0 16 Z" fill="#6a6a6a"/></svg><div style="position:absolute;left:0;top:16px;width:147px;height:34px;text-align:center;font-size:27.5px;line-height:34px;color:#c6c6c6;letter-spacing:0.2px">Same</div></div><div style="position:absolute;left:1520px;top:18px;width:153px;height:64px;background:#454545;border-radius:14px 14px 0 14px;"><svg style="position:absolute;right:0;bottom:0" width="16" height="16"><path d="M16 0 L16 16 L0 16 Z" fill="#6a6a6a"/></svg><div style="position:absolute;left:0;top:16px;width:153px;height:34px;text-align:center;font-size:27.5px;line-height:34px;color:#c6c6c6;letter-spacing:1px">Object</div></div><div style="position:absolute;left:2214px;top:0;width:2px;height:99px;background:#000"></div><div style="position:absolute;left:2230px;top:16px;width:120px;height:64px;background:#454545;border-radius:14px 14px 0 14px;"><svg style="position:absolute;right:0;bottom:0" width="16" height="16"><path d="M16 0 L16 16 L0 16 Z" fill="#6a6a6a"/></svg><svg style="position:absolute;left:10px;top:4px" width="50" height="50" viewBox="0 0 50 50"><path d="M14.2 45.4 L23.5 35.9" stroke="#dcdcdc" stroke-width="8.3" stroke-linecap="butt"/><circle cx="35.6" cy="23.4" r="16.6" fill="#454545"/><circle cx="35.6" cy="23.4" r="15.6" fill="#dcdcdc"/><circle cx="35.6" cy="23.4" r="10.6" fill="none" stroke="#3c3c3c" stroke-width="2"/></svg></div><div style="position:absolute;left:2314px;top:16px;width:2px;height:64px;background:#2e2e2e"></div><div style="position:absolute;left:2362px;top:16px;width:120px;height:64px;background:#454545;border-radius:14px 14px 0 14px;"><svg style="position:absolute;right:0;bottom:0" width="16" height="16"><path d="M16 0 L16 16 L0 16 Z" fill="#6a6a6a"/></svg><svg style="position:absolute;left:18px;top:6px" width="50" height="50" viewBox="0 0 50 50"><path d="M22.9 29.9 Q18 31.2 14.2 33.8 L4.5 22.9 Q24 3.7 43.1 22.9 L33.5 33.8 L30.5 32" fill="none" stroke="#dcdcdc" stroke-width="2.3" stroke-linejoin="round" stroke-linecap="round"/><path d="M30.5 18.1 L24.1 40.7" stroke="#dcdcdc" stroke-width="2.3" stroke-linecap="round"/><path d="M34 19.6 L38.6 23.5 L33.5 30.2 L31.7 29 Z" fill="#dcdcdc"/></svg></div><div style="position:absolute;left:2446px;top:16px;width:2px;height:64px;background:#2e2e2e"></div><div style="position:absolute;left:2494px;top:16px;width:120px;height:64px;background:#454545;border-radius:14px 14px 0 14px;"><svg style="position:absolute;right:0;bottom:0" width="16" height="16"><path d="M16 0 L16 16 L0 16 Z" fill="#6a6a6a"/></svg><svg style="position:absolute;left:21px;top:9px" width="45" height="45" viewBox="0 0 45 45"><path d="M13 19.6 L19.5 13.1 A8.4 8.4 0 0 1 31.3 24.9 L24.5 31.7" stroke="#dcdcdc" stroke-width="6.8" fill="none"/><path d="M11.9 20.7 L8.2 24.4 M23.4 32.8 L19.7 36.5" stroke="#dcdcdc" stroke-width="6.8" stroke-linecap="butt"/></svg></div><div style="position:absolute;left:2578px;top:16px;width:2px;height:64px;background:#2e2e2e"></div><svg style="position:absolute;left:2667px;top:35px" width="30" height="30" viewBox="0 0 30 30"><rect x="0" y="0" width="30" height="30" rx="5" fill="#9d9d9d"/><path d="M17 6 H24 V13 M6 17 V24 H13" fill="none" stroke="#2e2e2e" stroke-width="2.6"/></svg>
<div style="position:absolute;left:17px;top:122px;width:66px;height:66px;background:#1b1b1b;border-radius:11px"></div>
<svg style="position:absolute;left:28.0px;top:132.5px" width="44" height="44" viewBox="0 0 44 44"><path d="M12 4 L12 32 L19 25.5 L24.5 37 L30 34.5 L24.5 23 L34 22.5 Z" fill="#0a0a0a" stroke="#e6e6e6" stroke-width="2" stroke-linejoin="round"/></svg><svg style="position:absolute;left:28.0px;top:214.6px" width="44" height="44" viewBox="0 0 44 44"><path d="M13 9 L34 24 L21 25 L13 34 Z" fill="#d9d9d9" stroke="#d9d9d9" stroke-width="1.5" stroke-linejoin="round"/></svg><svg style="position:absolute;left:28.0px;top:296.7px" width="44" height="44" viewBox="0 0 44 44"><circle cx="22" cy="22.3" r="19.8" fill="none" stroke="#e2e2e2" stroke-width="2.4" stroke-dasharray="4.6 3.6"/><circle cx="22" cy="22.3" r="16.6" fill="#2a2a2a"/><circle cx="22" cy="22.3" r="15.7" fill="#6472de"/><circle cx="22" cy="22.3" r="8.4" fill="#2a2a2a"/><circle cx="22" cy="22.3" r="5.3" fill="none" stroke="#e2e2e2" stroke-width="3"/><path d="M30.2 5.1 L41.6 2.4 L38.6 14.2 Z" fill="#dcdcdc" stroke="#2a2a2a" stroke-width="1" stroke-linejoin="round"/></svg><svg style="position:absolute;left:28.0px;top:378.79999999999995px" width="44" height="44" viewBox="0 0 44 44"><path d="M3 31 V3 H30.5" fill="none" stroke="#e8e8e8" stroke-width="2.2"/><path d="M4.1 4.1 H28.5 A39.5 39.5 0 0 0 4.1 28.5 Z" fill="#777"/><path d="M5.7 42.1 A36.4 36.4 0 0 1 42.1 5.7" fill="none" stroke="#ff3d5a" stroke-width="2.6"/><path d="M8.7 42.1 A33.4 33.4 0 0 1 42.1 8.7 V17.1 A25 25 0 0 0 17.1 42.1 Z" fill="#b02a3c"/></svg><svg style="position:absolute;left:28.0px;top:460.9px" width="44" height="44" viewBox="0 0 44 44"><path d="M25 11.3 Q18 13.2 10.4 16.8 L3 39 L17.8 26 L28.7 15.2 Z" fill="#d9d9d9"/><path d="M28.7 15.2 L32.9 19.1 L27.2 34.2 L5.1 40.8 L17.8 26 Z" fill="#9a9a9a"/><path d="M17.8 26 L4 39.6" stroke="#262626" stroke-width="1.9"/><circle cx="17.8" cy="26" r="3" fill="#262626"/><path d="M26 8 L32.6 1.9 L41.9 11 L35.6 17.9 Z" fill="#ff6a50"/><path d="M26 8 L32.6 1.9 L33.8 3.1 L27.2 9.2 Z" fill="#ffa090"/></svg><svg style="position:absolute;left:28.0px;top:543.0px" width="44" height="44" viewBox="0 0 44 44"><path d="M12 28 L31 9 L38 16 L19 35 Z" fill="#dcc060"/><path d="M12 28 L19 35 L5 40 Z" fill="#ecdca8"/><path d="M11.5 28.5 L19 35.5 M30.5 9.5 L37.5 16.5" stroke="#1a1a1a" stroke-width="1.8"/><path d="M31 9 L35 5 L42 12 L38 16 Z" fill="#ee78e0"/><path d="M13 40 Q20 43 26 36 Q33 28 42 32" fill="none" stroke="#ddd" stroke-width="1.6"/></svg><svg style="position:absolute;left:28.0px;top:625.0999999999999px" width="44" height="44" viewBox="0 0 44 44"><path d="M20 22 L36 4 Q42 3 40 9 L26 26 Z" fill="#2d9ae8"/><path d="M20 22 Q12 20 10 28 Q9 33 3 34 Q12 38 20 32 Q26 27 20 22 Z" fill="#c89272"/><path d="M12 40 Q22 42 27 34 Q31 28 35 27" fill="none" stroke="#ddd" stroke-width="1.6"/><line x1="36" y1="20" x2="36" y2="40" stroke="#ddd" stroke-width="1.6"/><circle cx="36" cy="20" r="2.5" fill="#ddd"/><circle cx="36" cy="29" r="3.2" fill="#ddd"/><circle cx="36" cy="39" r="2.5" fill="#ddd"/></svg><svg style="position:absolute;left:28.0px;top:707.1999999999999px" width="44" height="44" viewBox="0 0 44 44"><path d="M23.2 20.6 L35.4 8.4" stroke="#b87858" stroke-width="9" stroke-linecap="round"/><circle cx="35.1" cy="8.6" r="2.1" fill="#1e1e1e"/><path d="M16.6 22.6 L21.2 27.2 L21.7 33.5 L3.5 38.8 L4.5 34.5 Z" fill="#9a9a9a"/><path d="M3.5 38.8 L21.7 33.5 L21.7 35.9 L2.1 41.7 Z" fill="#e4e4e4"/></svg><svg style="position:absolute;left:28.0px;top:789.3px" width="44" height="44" viewBox="0 0 44 44"><path d="M26.3 7.8 Q27.2 7 28.1 7.8 L41.2 21.6 Q42.2 22.6 41.2 23.6 L28.1 36.8 Q27.2 37.7 26.2 36.8 L13.5 23.7 Q12.6 22.6 13.5 21.6 Z" fill="#9a9a9a"/><path d="M18.7 14.3 L26.3 7.8 Q27.2 7 28.1 7.8 L41.2 21.6 Q42.2 22.6 41.2 23.6 L37.1 30 Z" fill="#dcdcdc"/><path d="M31 9.2 Q44 10 40.5 15 Q34 20 21 23.6 Q18 23.5 20.5 21 Q30 17.5 37 12.8" fill="none" stroke="#1e1e1e" stroke-width="4.2" stroke-linecap="round"/><path d="M31 9.2 Q44 10 40.5 15 Q34 20 21 23.6 Q18 23.5 20.5 21 Q30 17.5 37 12.8" fill="none" stroke="#e6e6e6" stroke-width="1.9" stroke-linecap="round"/><path d="M12 9.2 L17.8 14.6 M8.6 22.8 V29.2" stroke="#1ea5ee" stroke-width="3.3"/><circle cx="20.5" cy="5.7" r="3.5" fill="#dcdcdc" stroke="#1e1e1e" stroke-width="1"/><circle cx="8.6" cy="17.4" r="3.5" fill="#dcdcdc" stroke="#1e1e1e" stroke-width="1"/><circle cx="8.6" cy="35.2" r="3.4" fill="#1e1e1e" stroke="#e0e0e0" stroke-width="2.3"/></svg><svg style="position:absolute;left:28.0px;top:871.4px" width="44" height="44" viewBox="0 0 44 44"><defs><linearGradient id="gq1" gradientUnits="userSpaceOnUse" x1="6.2" y1="25.5" x2="26.2" y2="6"><stop offset="0" stop-color="#3a92bf"/><stop offset="0.38" stop-color="#aee2f7"/><stop offset="0.5" stop-color="#d8c2b4"/><stop offset="0.6" stop-color="#e0a47e"/><stop offset="1" stop-color="#eeeaa2"/></linearGradient><linearGradient id="gq2" gradientUnits="userSpaceOnUse" x1="17.6" y1="37.3" x2="37.7" y2="17.1"><stop offset="0" stop-color="#3a92bf"/><stop offset="0.38" stop-color="#aee2f7"/><stop offset="0.5" stop-color="#d8c2b4"/><stop offset="0.6" stop-color="#e0a47e"/><stop offset="1" stop-color="#eeeaa2"/></linearGradient></defs><path d="M22.6 2.6 L29.9 9.3 L9.4 29.5 L3 21.6 Z" fill="url(#gq1)" stroke="url(#gq1)" stroke-width="1.5" stroke-linejoin="round"/><path d="M34.4 13.8 L41 20.4 L21.1 40.3 L14.2 34.3 Z" fill="url(#gq2)" stroke="url(#gq2)" stroke-width="1.5" stroke-linejoin="round"/><path d="M6.3 37 L37.4 6" stroke="#222" stroke-width="4"/><path d="M6.3 37 L37.4 6" stroke="#e6e6e6" stroke-width="1.8"/><circle cx="6.3" cy="37" r="4.5" fill="#222"/><circle cx="37.4" cy="6" r="4.5" fill="#222"/><circle cx="6.3" cy="37" r="3.4" fill="none" stroke="#e6e6e6" stroke-width="2.2"/><circle cx="37.4" cy="6" r="3.4" fill="none" stroke="#e6e6e6" stroke-width="2.2"/></svg><svg style="position:absolute;left:28.0px;top:953.5px" width="44" height="44" viewBox="0 0 44 44"><path d="M5 10 L30 10 L30 33 L40 33 L40 38 L35 38 L35 43 L30 43 L30 38 L9 38 L9 5 L14 5 L14 10" fill="none"/><path d="M4 9 H29 V33 H41 V38 H34 V43 H29 V38 H9 V4 H14 V9" fill="none"/><path d="M4 8 H14 V3 H9 V8 Z" fill="none"/><g fill="#e0e0e0"><rect x="9" y="2" width="5" height="33"/><rect x="4" y="9" width="22" height="5"/><rect x="28" y="11" width="5" height="33"/><rect x="17" y="32" width="24" height="5"/></g><line x1="7" y1="41" x2="40" y2="6" stroke="#bdbdbd" stroke-width="2"/></svg><svg style="position:absolute;left:28.0px;top:1035.6px" width="44" height="44" viewBox="0 0 44 44"><rect x="6" y="6" width="32" height="32" fill="#262a2e" stroke="#dcdcdc" stroke-width="2.5" rx="1"/></svg><svg style="position:absolute;left:28.0px;top:1117.6999999999998px" width="44" height="44" viewBox="0 0 44 44"><circle cx="16.6" cy="15.9" r="14.5" fill="none" stroke="#8fd8fa" stroke-width="2.3" stroke-dasharray="4.2 3"/><circle cx="16.9" cy="16.2" r="9.5" fill="#2e8a96"/><rect x="19.9" y="19.2" width="17.8" height="17.8" fill="#2e8a96"/><path d="M16.3 35.5 V40.2 H40.9 V15.8 H36" fill="none" stroke="#8fd8fa" stroke-width="2.3" stroke-dasharray="4.2 3.5"/><path d="M14.8 14.1 H33.2 A18.4 18.4 0 0 1 14.8 32.5 Z" fill="#52f595" stroke="#222" stroke-width="1.6"/></svg><svg style="position:absolute;left:28.0px;top:1199.8px" width="44" height="44" viewBox="0 0 44 44"><rect x="6" y="6" width="32" height="32" fill="none" stroke="#2a84c6" stroke-width="2"/><g fill="#2a84c6"><circle cx="6" cy="6" r="3.3"/><circle cx="38" cy="6" r="3.3"/><circle cx="6" cy="38" r="3.3"/><circle cx="38" cy="38" r="3.3"/></g><text x="22" y="32" text-anchor="middle" font-family="Liberation Sans" font-size="27" fill="#d0d0d0">A</text></svg><svg style="position:absolute;left:28.0px;top:1281.8999999999999px" width="44" height="44" viewBox="0 0 44 44"><path d="M7 36.2 L23.8 19.6" stroke="#c4c4c4" stroke-width="7" stroke-linecap="round"/><path d="M6.5 34 L22 18.5" stroke="#e2e2e2" stroke-width="1.6"/><path d="M21.2 13.3 L24.6 12.2 Q25 5 31 2.5 Q37.5 0.5 41 5.5 Q43.5 11 40.5 15.5 Q37 19.5 32.5 19.2 L31.5 21.8 Z" fill="#b87858"/><path d="M21.5 13.6 L31.2 22.3" stroke="#1e1e1e" stroke-width="1.5"/></svg><svg style="position:absolute;left:28.0px;top:1364.0px" width="44" height="44" viewBox="0 0 44 44"><path d="M3 31 L31 7 L40 17 L12 41 Z" fill="#e5c24a" stroke="#e5c24a" stroke-width="2" stroke-linejoin="round"/><g stroke="#3a3010" stroke-width="2" stroke-linecap="round"><line x1="12" y1="34" x2="10" y2="32"/><line x1="17" y1="31" x2="13" y2="27"/><line x1="21" y1="26" x2="19" y2="24"/><line x1="26" y1="23" x2="22" y2="19"/><line x1="30" y1="18" x2="28" y2="16"/><line x1="34" y1="15" x2="31" y2="12"/></g></svg>
<svg style="position:absolute;left:71px;top:257.6px" width="10" height="10"><path d="M10 0 L10 10 L0 10 Z" fill="#5e5e5e"/></svg><svg style="position:absolute;left:71px;top:914.4px" width="10" height="10"><path d="M10 0 L10 10 L0 10 Z" fill="#5e5e5e"/></svg><svg style="position:absolute;left:71px;top:1078.6px" width="10" height="10"><path d="M10 0 L10 10 L0 10 Z" fill="#5e5e5e"/></svg><svg style="position:absolute;left:71px;top:1242.8px" width="10" height="10"><path d="M10 0 L10 10 L0 10 Z" fill="#5e5e5e"/></svg><svg style="position:absolute;left:71px;top:1324.8999999999999px" width="10" height="10"><path d="M10 0 L10 10 L0 10 Z" fill="#5e5e5e"/></svg><svg style="position:absolute;left:71px;top:1407.0px" width="10" height="10"><path d="M10 0 L10 10 L0 10 Z" fill="#5e5e5e"/></svg>
<div style="position:absolute;left:0;top:1804px;width:98px;height:2px;background:#000"></div><svg style="position:absolute;left:40px;top:1841px" width="20" height="20" viewBox="0 0 20 20"><path d="M1.5 1.5 L18.5 18.5 M18.5 1.5 L1.5 18.5" stroke="#dedede" stroke-width="1.9"/></svg><svg style="position:absolute;left:34px;top:1912px" width="31" height="42" viewBox="0 0 31 42"><path d="M11 6 V2.5 Q11 1 12.5 1 H18.5 Q20 1 20 2.5 V6" fill="none" stroke="#dedede" stroke-width="2.1"/><path d="M1 10 V7 Q1 6 2 6 H29 Q30 6 30 7 V10" fill="none" stroke="#dedede" stroke-width="2.1"/><path d="M3.5 10 V39 Q3.5 41 5.5 41 H25.5 Q27.5 41 27.5 39 V10" fill="none" stroke="#dedede" stroke-width="2.1"/><path d="M11.5 13 V34 M19.5 13 V34" stroke="#dedede" stroke-width="2.1"/></svg>
<div style="position:absolute;left:2632px;top:100px;width:2px;height:1948px;background:#000"></div><div style="position:absolute;left:2634px;top:100px;width:98px;height:1948px;background:#232323"></div><div style="position:absolute;left:2634px;top:314px;width:98px;height:2px;background:#000"></div><div style="position:absolute;left:2634px;top:1640px;width:98px;height:2px;background:#000"></div><svg style="position:absolute;left:2650px;top:123px" width="64" height="64" viewBox="0 0 64 64"><circle cx="32" cy="32" r="31" fill="#fff" stroke="#555" stroke-width="1.6"/></svg><svg style="position:absolute;left:2657px;top:211px" width="50" height="44" viewBox="0 0 50 44"><path d="M3 40 Q10 25 24 20 Q38 15 46 3 Q48 8 44 13 Q36 24 22 28 Q11 32 4 41 Z" fill="#000" stroke="#777" stroke-width="1"/></svg><div style="position:absolute;left:2642px;top:272px;width:80px;text-align:center;font-size:16.5px;line-height:22px;color:#ababab;letter-spacing:0.3px">0pt</div><div style="position:absolute;left:2647px;top:326px;width:70px;height:70px;background:#3f3f3f;border-radius:13px"></div><svg style="position:absolute;left:2660px;top:340px" width="44" height="42" viewBox="0 0 44 42"><path d="M21.5 3 L42.2 15.2 L22.3 27.8 L2.1 15.2 Z" fill="#9a9a9a" stroke="#9a9a9a" stroke-width="1" stroke-linejoin="round"/><path d="M26.6 8.4 L38.8 16 L22.3 25.7 L9.3 18.5 Z" fill="#3f3f3f"/><path d="M2.1 21.1 L22.3 32.9 L42.2 21.1 M2.1 26.1 L22.3 38.4 L42.2 26.1" fill="none" stroke="#9a9a9a" stroke-width="2.6"/></svg><svg style="position:absolute;left:2657px;top:415px" width="50" height="50" viewBox="0 0 50 50"><path d="M23.3 21.5 L36 9 Q41.5 5.5 44 8.3 Q46 11.5 41 18.5 L30.5 29.5 Q29.5 30.5 28.3 29.5 L23.5 24.7 Q22.3 23 23.3 21.5 Z" fill="#9a9a9a"/><path d="M7.4 38.5 Q11.5 37.8 13 32.5 Q15 27 21 26.8 Q26 27 25.9 31.5 Q25 38.5 18.5 40 Q12 41.2 7.4 38.5 Z" fill="#9a9a9a"/><path d="M14 46 Q23.5 48.5 27.8 40 Q31.5 33 40.5 35.3" fill="none" stroke="#9a9a9a" stroke-width="2.4" stroke-linecap="round"/><path d="M35 33.6 Q39 33.4 42 34.8 L40.6 38.6 Q38 37.3 35 37.3 Z" fill="#9a9a9a"/></svg><svg style="position:absolute;left:2660px;top:500px" width="44" height="50" viewBox="0 0 44 50"><defs><clipPath id="ec"><rect x="10.2" y="10.8" width="23.6" height="28.3"/></clipPath></defs><rect x="7.7" y="8.3" width="28.6" height="33.3" rx="2" fill="none" stroke="#9a9a9a" stroke-width="2.4"/><g clip-path="url(#ec)" stroke="#9a9a9a" stroke-width="2.6"><path d="M4 21 L14 7 M10 21 L20 7 M16 21 L26 7 M22 21 L32 7 M28 21 L38 7 M34 21 L44 7 M4 43 L14 29 M10 43 L20 29 M16 43 L26 29 M22 43 L32 29 M28 43 L38 29 M34 43 L44 29"/></g><path d="M7.1 25 Q22 9.4 36.9 25 Q22 40.6 7.1 25 Z" fill="#9a9a9a" stroke="#232323" stroke-width="2.4"/><circle cx="21.9" cy="24.9" r="5.4" fill="#232323"/></svg><svg style="position:absolute;left:2657px;top:580px" width="50" height="52" viewBox="0 0 50 52"><path d="M7.12 21.85 A18.7 18.7 0 0 1 19.01 9.32 M31.19 9.32 A18.7 18.7 0 0 1 43.08 21.85 M43.08 32.15 A18.7 18.7 0 0 1 31.19 44.68 M19.01 44.68 A18.7 18.7 0 0 1 7.12 32.15" fill="none" stroke="#9a9a9a" stroke-width="2" stroke-linecap="round"/><circle cx="25.1" cy="27" r="15.2" fill="none" stroke="#9a9a9a" stroke-width="2.3"/><path d="M25.1 26.7 Q31.8 20.5 30.6 12.5 M25.1 26.7 Q18.5 22 10.6 26.3 M25.1 26.7 Q23.5 34.5 32.8 38.2" fill="none" stroke="#9a9a9a" stroke-width="2.3"/></svg><svg style="position:absolute;left:2666px;top:670px" width="32" height="38" viewBox="0 0 32 38"><rect x="0" y="0" width="32" height="2.6" fill="#9a9a9a"/><rect x="0" y="35" width="32" height="2.6" fill="#9a9a9a"/><path d="M0 7 H12 V11 H4.5 V15 H10 V19 H4.5 V30 H0 Z" fill="#9a9a9a"/><path d="M10 7 H15.5 L21 15 L26.5 7 H32 L24 18.5 L32 30 H26.5 L21 22 L15.5 30 H10 L18 18.5 Z" fill="#9a9a9a"/></svg><svg style="position:absolute;left:2664px;top:753px" width="36" height="36" viewBox="0 0 36 36"><circle cx="18" cy="18" r="16.8" fill="none" stroke="#9a9a9a" stroke-width="2.3"/><path d="M28 8 A12 12 0 0 1 10 26 Z" fill="#9a9a9a"/></svg><svg style="position:absolute;left:2666px;top:828px" width="32" height="36" viewBox="0 0 32 36"><rect x="1.2" y="1.2" width="29.6" height="33.6" fill="none" stroke="#9a9a9a" stroke-width="2.4"/><text x="16" y="27.5" text-anchor="middle" font-family="Liberation Sans" font-size="30" fill="#9a9a9a">a</text></svg><div style="position:absolute;left:2642px;top:864px;width:80px;text-align:center;font-size:16.5px;line-height:22px;color:#ababab;letter-spacing:0.5px">78pt</div><svg style="position:absolute;left:2666px;top:923px" width="32" height="36" viewBox="0 0 32 36"><rect x="0" y="0" width="32" height="2.6" fill="#9a9a9a"/><rect x="0" y="7" width="13.5" height="13" rx="2" fill="#9a9a9a"/><rect x="18" y="9.5" width="14" height="2.6" fill="#9a9a9a"/><rect x="18" y="16" width="14" height="2.6" fill="#9a9a9a"/><rect x="0" y="27" width="13.5" height="2.6" fill="#9a9a9a"/><rect x="0" y="33" width="13.5" height="2.6" fill="#9a9a9a"/><circle cx="25" cy="29" r="7" fill="#9a9a9a"/></svg><svg style="position:absolute;left:2664px;top:1005px" width="37" height="38" viewBox="0 0 37 38"><rect x="1.2" y="1.2" width="30" height="24" rx="2" fill="none" stroke="#9a9a9a" stroke-width="2.4"/><path d="M2 15 L10 8 L20 17 L30 12" fill="none" stroke="#9a9a9a" stroke-width="2.4"/><circle cx="21.5" cy="8.5" r="3.2" fill="#9a9a9a"/><path d="M35 8 V31 H5 V26 M31 37 H1.2 V30" fill="none" stroke="#9a9a9a" stroke-width="2.4"/></svg><svg style="position:absolute;left:2662px;top:1085px" width="41" height="41" viewBox="0 0 41 41"><path d="M10 12 V1.2 H27 L39 13 V39 H26 M27 1.2 V13 H39" fill="none" stroke="#9a9a9a" stroke-width="2.4"/><g transform="translate(13.5 28)"><circle r="9.5" fill="#9a9a9a"/><g fill="#9a9a9a"><rect x="-2.5" y="-13" width="5" height="26" rx="1"/><rect x="-2.5" y="-13" width="5" height="26" rx="1" transform="rotate(60)"/><rect x="-2.5" y="-13" width="5" height="26" rx="1" transform="rotate(120)"/></g><circle r="4" fill="#232323"/></g></svg><svg style="position:absolute;left:2664px;top:1669px" width="36" height="36" viewBox="0 0 36 36"><rect x="4" y="4" width="28" height="28" fill="none" stroke="#9a9a9a" stroke-width="2.3"/><g fill="#9a9a9a"><circle cx="4" cy="4" r="3.8"/><circle cx="18" cy="4" r="3.8"/><circle cx="32" cy="4" r="3.8"/><circle cx="4" cy="18" r="3.8"/><circle cx="32" cy="18" r="3.8"/><circle cx="4" cy="32" r="3.8"/><circle cx="18" cy="32" r="3.8"/><circle cx="32" cy="32" r="3.8"/><rect x="15" y="15" width="6" height="6" rx="1"/></g></svg><svg style="position:absolute;left:2662px;top:1748px" width="41" height="41" viewBox="0 0 41 41"><g fill="#9a9a9a"><path d="M20.5 0.5 L26.5 8.5 H14.5 Z"/><path d="M20.5 40.5 L26.5 32.5 H14.5 Z"/><path d="M0.5 20.5 L8.5 14.5 V26.5 Z"/><path d="M40.5 20.5 L32.5 14.5 V26.5 Z"/></g><rect x="12" y="12" width="17" height="17" rx="1.5" fill="none" stroke="#9a9a9a" stroke-width="2.3" stroke-dasharray="6.5 4 6.5 0"/></svg><svg style="position:absolute;left:2662px;top:1831px" width="41" height="38" viewBox="0 0 41 38"><circle cx="19" cy="19" r="17.3" fill="none" stroke="#9a9a9a" stroke-width="2.3"/><path d="M30.56 23.21 A12.3 12.3 0 1 1 16.86 6.89" fill="none" stroke="#9a9a9a" stroke-width="2.3" stroke-dasharray="5.5 3"/><path d="M19 6 V19 H31" fill="none" stroke="#9a9a9a" stroke-width="2.3"/><circle cx="19" cy="19" r="3.4" fill="#9a9a9a"/><rect x="35.5" y="13.5" width="5" height="11" rx="1.2" fill="#9a9a9a"/></svg><svg style="position:absolute;left:2667px;top:1918px" width="30" height="30" viewBox="0 0 30 30"><rect x="0" y="0" width="30" height="30" rx="5" fill="#9d9d9d"/><path d="M10 11 Q10 5.5 15.5 5.5 Q21 5.5 21 10.5 Q21 13.5 17.5 15 Q15.5 16 15.5 19" fill="none" stroke="#232323" stroke-width="3.2"/><circle cx="15.5" cy="23.5" r="2.2" fill="#232323"/></svg>
</body></html>
